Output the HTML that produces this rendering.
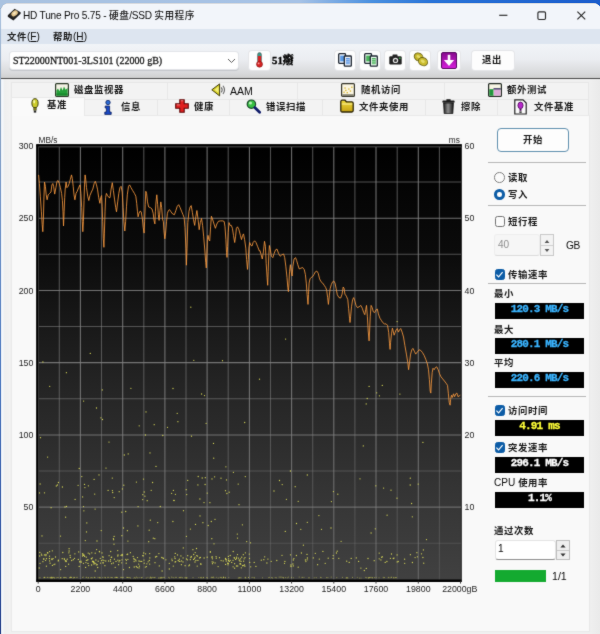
<!DOCTYPE html>
<html lang="zh-CN">
<head>
<meta charset="utf-8">
<title>HD Tune Pro 5.75 - 硬盘/SSD 实用程序</title>
<style>
*{box-sizing:border-box;margin:0;padding:0}
html,body{width:600px;height:634px;overflow:hidden}
body{position:relative;font-family:"Liberation Sans","Noto Sans CJK SC",sans-serif;font-size:10px;color:#1a1a1a;
 background:linear-gradient(90deg,#a9c2e0 0%,#a6c2e6 50%,#4a90e0 62%,#2a74d8 72%,#1a5ccc 100%);}
.abs{position:absolute}
#frame{position:absolute;left:0.8px;top:3px;width:600px;height:632px;background:#f0f0f0;border-radius:8px 8px 0 0;overflow:hidden}
#title{position:absolute;left:0;top:0;width:600px;height:29px;background:#f2f5fa}
#menu{position:absolute;left:0;top:29px;width:600px;height:15px;background:#dde5f0}
#tool{position:absolute;left:0;top:44px;width:600px;height:35px;background:linear-gradient(180deg,#f1f4f8 0%,#ebedf1 45%,#d9dadc 85%,#cfcfcf 100%);border-bottom:1.5px solid #4c4c4c}
.t{will-change:transform;position:absolute;white-space:nowrap;line-height:14px;font-size:9.4px;letter-spacing:0.6px;color:#161616;font-weight:700}
.l{font-size:10.1px;letter-spacing:0;font-weight:400;color:#0a0a0a}
.combo{position:absolute;left:10px;top:52px;width:228px;height:17px;background:#fff;border-radius:3px;box-shadow:0 0 0 1px #e3e5e9,0 1px 0 1px #c4c6ca}
.ser{font-family:"Liberation Serif","Noto Serif CJK SC",serif;font-weight:bold;font-size:10px;letter-spacing:0}
.tbtn{position:absolute;top:51px;height:19px;background:#fdfdfd;border-radius:3px;box-shadow:0 0 0 1px #e4e5e8}
.tab{position:absolute;border:1px solid #e7e7e7;border-bottom:none;background:#f3f3f3}
#page{position:absolute;left:10.6px;top:115px;width:579px;height:517.3px;background:#f9f9f9;border:1px solid #e9e9e9}
.sep{position:absolute;left:488px;width:98px;height:1.3px;background:#b6b6b6}
.lcd{will-change:transform;position:absolute;left:495px;width:89px;height:15.5px;background:#000;font-family:"Liberation Mono",monospace;font-weight:bold;font-size:11px;letter-spacing:-0.84px;line-height:13px;text-align:center;white-space:nowrap;-webkit-text-stroke:0.3px currentColor}
.cb{position:absolute;left:494.5px;width:10.5px;height:10.5px;border-radius:2.5px;border:1.3px solid #727272;background:#fbfbfb}
.cb.on{background:#0c5ca6;border-color:#0c5ca6}
.cb svg{position:absolute;left:-1.3px;top:-1.3px}
.rd{position:absolute;left:494.4px;width:10.6px;height:10.6px;border-radius:50%;border:1.3px solid #7c7c7c;background:#fbfbfb}
.rd.on{border:3.2px solid #0c5ca6;background:#fff}
.axis text{font-family:"Liberation Sans",sans-serif;font-size:8.8px;fill:#1c1c1c}
</style>
</head>
<body>
<svg width="0" height="0" style="position:absolute"><defs><filter id="soft" x="0" y="0" width="100%" height="100%" color-interpolation-filters="sRGB"><feConvolveMatrix order="3" kernelMatrix="0.02 0.07 0.02 0.07 0.64 0.07 0.02 0.07 0.02" divisor="1" edgeMode="duplicate" preserveAlpha="true"/></filter></defs></svg>
<div id="root" style="position:absolute;left:0;top:0;width:600px;height:634px;overflow:hidden;filter:url(#soft)">
<div class="abs" style="left:0;top:8px;width:2px;height:626px;background:linear-gradient(180deg,#a9c2e0 0,#8fa6c0 14%,#6e92c6 30%,#3f6eba 60%,#1c3f94 92%,#14307e 100%)"></div>
<div id="frame"></div>
<div class="abs" style="left:0.8px;top:3px;width:600px;height:632px;border-radius:8px 8px 0 0;overflow:hidden">
 <div class="abs" style="left:-0.8px;top:-3px;width:600px;height:634px">
 <div id="title"></div>
 <div id="menu"></div>
 <div id="tool"></div>
 <div class="abs" style="left:1px;top:79px;width:9px;height:555px;background:linear-gradient(90deg,#f3f6fa 0,#f3f6fa 20%,#efefef 40%,#f2f2f2 100%)"></div>
 <div class="abs" style="left:589px;top:79px;width:11px;height:555px;background:linear-gradient(90deg,#f0f0f0,#eaeaea)"></div>
 </div>
</div>

<!-- title -->
<svg class="abs" style="left:0;top:0" width="30" height="26" viewBox="0 0 30 26"><polygon points="7.8,15.2 14.6,8.8 20.6,12.2 20.6,13.8 13.4,20.6 7.8,16.8" fill="#1e1e1e"/><polygon points="9.2,15.2 14.7,10 19.2,12.5 13.5,18" fill="#3a342c"/><ellipse cx="14.6" cy="13.4" rx="3.5" ry="2.5" transform="rotate(-38 14.6 13.4)" fill="#e6c88e"/><ellipse cx="14.4" cy="13.2" rx="1.5" ry="1" transform="rotate(-38 14.4 13.2)" fill="#f6e8c8"/></svg>
<div class="t" style="left:23.3px;top:9px;font-weight:500;font-size:9.7px;letter-spacing:0.5px"><span class="l" style="letter-spacing:-0.2px">HD Tune Pro 5.75 - </span>硬盘<span class="l" style="letter-spacing:-0.3px">/SSD </span>实用程序</div>
<svg class="abs" style="left:490px;top:5px" width="110" height="22" viewBox="0 0 110 22" fill="none" stroke="#262626" stroke-width="1.15"><line x1="9.2" y1="10.3" x2="17.4" y2="10.3"/><rect x="47.9" y="6.9" width="7.6" height="7.6" rx="1.2"/><path d="M87.4 6.6 L95.2 14.4 M95.2 6.6 L87.4 14.4"/></svg>

<!-- menu -->
<div class="t" style="left:6.7px;top:29.5px">文件<span class="l">(<u>F</u>)</span></div>
<div class="t" style="left:53.3px;top:29.5px">帮助<span class="l">(<u>H</u>)</span></div>

<!-- toolbar -->
<div class="combo"></div>
<div class="t ser" style="left:12.7px;top:53.5px;letter-spacing:0.03px;color:#1a1a1a;font-weight:400;-webkit-text-stroke:0.3px #1a1a1a">ST22000NT001-3LS101 (22000 gB)</div>
<svg class="abs" style="left:227px;top:58px" width="9" height="6" viewBox="0 0 9 6" fill="none" stroke="#5a5a5a" stroke-width="1"><path d="M1 1 L4.5 4.5 L8 1"/></svg>
<div class="tbtn" style="left:249px;width:21px"></div>
<svg class="abs" style="left:254px;top:52px" width="11" height="16" viewBox="0 0 11 16"><rect x="3.6" y="0.6" width="3.8" height="10" rx="1.9" fill="#3a9a8a" stroke="#555" stroke-width="0.6"/><rect x="3.9" y="4" width="3.2" height="8" fill="#d62222"/><circle cx="5.5" cy="12.2" r="3" fill="#d62222" stroke="#7a1010" stroke-width="0.6"/><circle cx="4.6" cy="11.4" r="0.9" fill="#f6a0a0"/></svg>
<div class="t ser" style="left:272.4px;top:53.3px;color:#000;font-size:10.8px;font-weight:900;-webkit-text-stroke:0.35px #000">51癈</div>
<div class="tbtn" style="left:334.5px;width:20.5px"></div>
<div class="tbtn" style="left:359.5px;width:20.5px"></div>
<div class="tbtn" style="left:384.5px;width:20.5px"></div>
<div class="tbtn" style="left:409.5px;width:20.5px"></div>
<div class="tbtn" style="left:437.5px;width:22.5px"></div>
<div class="tbtn" style="left:471.6px;width:42px"></div>
<svg class="abs" style="left:338px;top:53px" width="14" height="14" viewBox="0 0 14 14"><rect x="0.7" y="0.7" width="6.8" height="9.6" rx="0.8" fill="#f4f8ff" stroke="#1c2430" stroke-width="1.3"/><rect x="2.2" y="2.6" width="3.8" height="5.8" fill="#5a9ae6"/><rect x="6.3" y="3" width="7" height="10.2" rx="0.8" fill="#f4f8ff" stroke="#1c2430" stroke-width="1.3"/><rect x="7.9" y="5" width="3.8" height="6.2" fill="#4a8ae0"/><path d="M8 6.4 H11.6 M8 8.2 H11.6 M8 10 H11.6" stroke="#dcecff" stroke-width="0.7"/></svg>
<svg class="abs" style="left:363.5px;top:53px" width="14" height="14" viewBox="0 0 14 14"><rect x="0.7" y="0.7" width="6.8" height="9.6" rx="0.8" fill="#f4fff6" stroke="#1c2430" stroke-width="1.3"/><rect x="2.2" y="2.6" width="3.8" height="5.8" fill="#4ab45a"/><rect x="6.3" y="3" width="7" height="10.2" rx="0.8" fill="#f4fff6" stroke="#1c2430" stroke-width="1.3"/><rect x="7.9" y="5" width="3.8" height="6.2" fill="#3aa64a"/><path d="M8 6.4 H11.6 M8 8.2 H11.6 M8 10 H11.6" stroke="#dcffe2" stroke-width="0.7"/></svg>
<svg class="abs" style="left:388.5px;top:54px" width="13" height="11" viewBox="0 0 13 11"><rect x="0.3" y="2.3" width="12.4" height="8.2" rx="1.2" fill="#222"/><rect x="3.5" y="0.4" width="5" height="3" rx="0.6" fill="#222"/><circle cx="6.5" cy="6.4" r="2.7" fill="#e8e8e8"/><circle cx="6.5" cy="6.4" r="1.5" fill="#363636"/><rect x="10" y="3.6" width="1.6" height="1.2" fill="#3ac04a"/></svg>
<svg class="abs" style="left:413px;top:52px" width="16" height="15" viewBox="0 0 16 15"><ellipse cx="5.6" cy="5" rx="4.6" ry="3.8" transform="rotate(30 5.6 5)" fill="#c4b628" stroke="#6a6214" stroke-width="0.9"/><ellipse cx="10" cy="9.6" rx="4.8" ry="3.9" transform="rotate(30 10 9.6)" fill="#cabc2e" stroke="#6a6214" stroke-width="0.9"/><ellipse cx="5.4" cy="4.6" rx="2" ry="1.4" transform="rotate(30 5.4 4.6)" fill="#e6dc6a"/><ellipse cx="9.8" cy="9.2" rx="2.2" ry="1.5" transform="rotate(30 9.8 9.2)" fill="#e6dc6a"/></svg>
<svg class="abs" style="left:441px;top:51.5px" width="16" height="17" viewBox="0 0 16 17"><defs><linearGradient id="pg" x1="0" y1="0" x2="0" y2="1"><stop offset="0" stop-color="#86088c"/><stop offset="1" stop-color="#d620dc"/></linearGradient></defs><rect x="0.5" y="0.5" width="15" height="16" rx="1.5" fill="url(#pg)" stroke="#560660"/><path d="M8 2.8 V10" fill="none" stroke="#fff" stroke-width="2.6"/><path d="M2.8 8 L8 14 L13.2 8 Z" fill="#fff"/></svg>
<div class="t" style="left:482.4px;top:53.3px">退出</div>

<!-- tab row 1 -->
<div class="tab" style="left:11px;top:81.5px;width:157px;height:17px"></div>
<div class="tab" style="left:167px;top:81.5px;width:131px;height:17px"></div>
<div class="tab" style="left:297px;top:81.5px;width:147.5px;height:17px"></div>
<div class="tab" style="left:443.5px;top:81.5px;width:145px;height:17px"></div>
<!-- tab row 2 -->
<div class="tab" style="left:84px;top:98.5px;width:74px;height:17px"></div>
<div class="tab" style="left:157px;top:98.5px;width:73px;height:17px"></div>
<div class="tab" style="left:229px;top:98.5px;width:94px;height:17px"></div>
<div class="tab" style="left:322px;top:98.5px;width:104px;height:17px"></div>
<div class="tab" style="left:425px;top:98.5px;width:73px;height:17px"></div>
<div class="tab" style="left:497px;top:98.5px;width:91.5px;height:17px"></div>
<div id="page"></div>
<div class="tab" style="left:10.6px;top:96.8px;width:74.9px;height:19.7px;background:#fafafa;border-color:#e9e9e9"></div>

<!-- tab labels -->
<div class="t" style="left:74px;top:83.2px">磁盘监视器</div>
<div class="t l" style="left:230.4px;top:83.6px;font-size:10.5px">AAM</div>
<div class="t" style="left:361px;top:83.3px">随机访问</div>
<div class="t" style="left:507px;top:83.3px">额外测试</div>
<div class="t" style="left:47px;top:98.3px">基准</div>
<div class="t" style="left:120.7px;top:100.3px">信息</div>
<div class="t" style="left:193.5px;top:100.3px">健康</div>
<div class="t" style="left:266px;top:100.3px">错误扫描</div>
<div class="t" style="left:358.7px;top:100.3px">文件夹使用</div>
<div class="t" style="left:460.5px;top:100.3px">擦除</div>
<div class="t" style="left:533.7px;top:100.3px">文件基准</div>

<!-- tab icons -->
<svg class="abs" style="left:54.5px;top:83px" width="14" height="14" viewBox="0 0 14 14"><rect x="0.6" y="0.6" width="12.8" height="12.8" rx="1" fill="#f4f2e4" stroke="#2a3a26" stroke-width="1.2"/><path d="M1.4 12.6 V7.6 L3 5.6 L4.4 8.2 L6 4 L7.6 7.6 L9 3.4 L10.6 6.8 L12.6 5 V12.6 Z" fill="#25a03a"/><path d="M1.4 12.6 V10.4 H12.6 V12.6 Z" fill="#178a2c"/></svg>
<svg class="abs" style="left:210.6px;top:83px" width="16" height="14" viewBox="0 0 16 14"><path d="M0.8 6.8 L8.6 0.9 V12.9 Z" fill="#d8d022" stroke="#3e3a0a" stroke-width="1" stroke-linejoin="round"/><path d="M3.4 6.8 L7.6 3.6 V10 Z" fill="#f2ee7a"/><path d="M10.2 4.4 Q12.2 6.9 10.2 9.4 M12 2.8 Q15 6.9 12 11" fill="none" stroke="#6a6a6a" stroke-width="1.1"/></svg>
<svg class="abs" style="left:341px;top:83px" width="14" height="14" viewBox="0 0 14 14"><rect x="0.6" y="0.6" width="12.8" height="12.8" rx="1" fill="#fbf6e2" stroke="#34342a" stroke-width="1.2"/><g fill="#d8b428"><rect x="2.4" y="8.6" width="1.3" height="1.3"/><rect x="4.2" y="6.8" width="1.3" height="1.3"/><rect x="5.6" y="9" width="1.3" height="1.3"/><rect x="7.2" y="5.4" width="1.3" height="1.3"/><rect x="8.8" y="7.4" width="1.3" height="1.3"/><rect x="10.2" y="3.6" width="1.3" height="1.3"/><rect x="3.4" y="4.4" width="1.3" height="1.3"/></g><rect x="1.4" y="11.4" width="11.2" height="1.2" fill="#5a5a4a"/></svg>
<svg class="abs" style="left:487.5px;top:83px" width="14" height="14" viewBox="0 0 14 14"><rect x="0.6" y="0.6" width="12.8" height="12.8" rx="1" fill="#f8f6e4" stroke="#222a24" stroke-width="1.2"/><rect x="1.3" y="6.2" width="4.2" height="6.5" fill="#22963e"/><rect x="5.5" y="5.2" width="7.2" height="1.5" fill="#2a2a5a"/><rect x="5.9" y="6.7" width="6.6" height="5.9" fill="#dcaad8"/></svg>

<svg class="abs" style="left:29.8px;top:98px" width="10" height="16" viewBox="0 0 10 16"><ellipse cx="5" cy="5.2" rx="3.1" ry="4.5" fill="#cccc2a" stroke="#3e3e0c" stroke-width="1"/><ellipse cx="4.2" cy="3.8" rx="1" ry="1.7" fill="#f6f6a8"/><rect x="3.8" y="9.4" width="2.4" height="2.8" fill="#86861e" stroke="#3a3a0e" stroke-width="0.6"/><rect x="3.8" y="12.6" width="2.4" height="2" fill="#262626"/></svg>
<svg class="abs" style="left:102.8px;top:99.5px" width="10" height="15" viewBox="0 0 10 15"><circle cx="5" cy="2.5" r="2.2" fill="#2a6ad4" stroke="#0c2260" stroke-width="0.8"/><path d="M2.2 6 H6.6 V12 H8.2 V14.4 H1.8 V12 H3.4 V8 H2.2 Z" fill="#1a48c4" stroke="#0c2260" stroke-width="0.8"/></svg>
<svg class="abs" style="left:174.5px;top:99.3px" width="14" height="14" viewBox="0 0 14 14"><path d="M4.8 0.7 H9.2 V4.8 H13.3 V9.2 H9.2 V13.3 H4.8 V9.2 H0.7 V4.8 H4.8 Z" fill="#e02020" stroke="#5e0a0a" stroke-width="1.1"/><path d="M5.8 1.8 H8.2 M1.8 5.9 H4.8" stroke="#f89a9a" stroke-width="0.8"/></svg>
<svg class="abs" style="left:246px;top:99px" width="16" height="15" viewBox="0 0 16 15"><circle cx="5.4" cy="5.2" r="4.2" fill="#38c044" stroke="#1a4a2a" stroke-width="1.2"/><circle cx="4.4" cy="4" r="1.6" fill="#b6f0b6"/><path d="M8.8 8.6 L13.6 13.2" stroke="#101c6a" stroke-width="2.8" stroke-linecap="round"/></svg>
<svg class="abs" style="left:339.5px;top:99.3px" width="14" height="14" viewBox="0 0 14 14"><defs><linearGradient id="fg" x1="0" y1="0" x2="0" y2="1"><stop offset="0" stop-color="#f0dc3c"/><stop offset="1" stop-color="#c4a012"/></linearGradient></defs><path d="M0.8 2.8 Q0.8 1.2 2.2 1.2 H5 L6.4 2.8 H11.8 Q13.2 2.8 13.2 4.2 V11.6 Q13.2 13 11.8 13 H2.2 Q0.8 13 0.8 11.6 Z" fill="url(#fg)" stroke="#2e2606" stroke-width="1.3"/><path d="M1.8 5 H12.2" stroke="#fbf0a0" stroke-width="1"/></svg>
<svg class="abs" style="left:441.6px;top:99.2px" width="13" height="15" viewBox="0 0 13 15"><defs><linearGradient id="tg" x1="0" y1="0" x2="1" y2="0"><stop offset="0" stop-color="#1e1e1e"/><stop offset="0.45" stop-color="#8e8e8e"/><stop offset="0.7" stop-color="#5a5a5a"/><stop offset="1" stop-color="#161616"/></linearGradient></defs><rect x="0.4" y="1.4" width="12.2" height="2.4" rx="0.8" fill="#1c1c1c"/><rect x="4.4" y="0.2" width="4.2" height="1.8" fill="#1c1c1c"/><path d="M1.6 4 H11.4 L10.8 14.6 H2.2 Z" fill="url(#tg)" stroke="#141414" stroke-width="0.8"/></svg>
<svg class="abs" style="left:513.9px;top:98.7px" width="13" height="16" viewBox="0 0 13 16"><path d="M0.8 0.8 H9 L12.2 4 V15 H0.8 Z" fill="#fbfbfb" stroke="#222" stroke-width="1.2"/><ellipse cx="6.5" cy="6.4" rx="2.6" ry="3.3" fill="#b828cc" stroke="#4a0a56" stroke-width="0.8"/><rect x="5.5" y="9.8" width="2" height="2" fill="#4a0a56"/><rect x="5.3" y="12.4" width="2.4" height="1.4" fill="#222"/></svg>

<!-- chart -->
<svg class="abs" style="left:0;top:0;will-change:transform" width="600" height="634" viewBox="0 0 600 634">
 <defs><linearGradient id="bg" x1="0" y1="0" x2="0" y2="1"><stop offset="0" stop-color="#000"/><stop offset="0.25" stop-color="#0b0b0b"/><stop offset="0.55" stop-color="#242424"/><stop offset="0.8" stop-color="#353535"/><stop offset="1" stop-color="#414141"/></linearGradient><linearGradient id="glM" gradientUnits="userSpaceOnUse" x1="0" y1="145" x2="0" y2="581"><stop offset="0" stop-color="#828282" stop-opacity="0.88"/><stop offset="0.6" stop-color="#828282" stop-opacity="0.86"/><stop offset="1" stop-color="#828282" stop-opacity="0.6"/></linearGradient><linearGradient id="glm" gradientUnits="userSpaceOnUse" x1="0" y1="145" x2="0" y2="581"><stop offset="0" stop-color="#828282" stop-opacity="0.62"/><stop offset="0.6" stop-color="#828282" stop-opacity="0.55"/><stop offset="1" stop-color="#828282" stop-opacity="0.25"/></linearGradient></defs>
 <rect x="36.4" y="144.4" width="425.2" height="437.3" fill="url(#bg)"/>
 <g stroke="#6b6b6b" stroke-width="1.05">
<line x1="59.3" y1="146" x2="59.3" y2="580" stroke="url(#glm)"/>
<line x1="80.4" y1="146" x2="80.4" y2="580" stroke="url(#glM)"/>
<line x1="101.5" y1="146" x2="101.5" y2="580" stroke="url(#glm)"/>
<line x1="122.7" y1="146" x2="122.7" y2="580" stroke="url(#glM)"/>
<line x1="143.8" y1="146" x2="143.8" y2="580" stroke="url(#glm)"/>
<line x1="164.9" y1="146" x2="164.9" y2="580" stroke="url(#glM)"/>
<line x1="186.0" y1="146" x2="186.0" y2="580" stroke="url(#glm)"/>
<line x1="207.1" y1="146" x2="207.1" y2="580" stroke="url(#glM)"/>
<line x1="228.2" y1="146" x2="228.2" y2="580" stroke="url(#glm)"/>
<line x1="249.4" y1="146" x2="249.4" y2="580" stroke="url(#glM)"/>
<line x1="270.5" y1="146" x2="270.5" y2="580" stroke="url(#glm)"/>
<line x1="291.6" y1="146" x2="291.6" y2="580" stroke="url(#glM)"/>
<line x1="312.7" y1="146" x2="312.7" y2="580" stroke="url(#glm)"/>
<line x1="333.8" y1="146" x2="333.8" y2="580" stroke="url(#glM)"/>
<line x1="354.9" y1="146" x2="354.9" y2="580" stroke="url(#glm)"/>
<line x1="376.0" y1="146" x2="376.0" y2="580" stroke="url(#glM)"/>
<line x1="397.2" y1="146" x2="397.2" y2="580" stroke="url(#glm)"/>
<line x1="418.3" y1="146" x2="418.3" y2="580" stroke="url(#glM)"/>
<line x1="439.4" y1="146" x2="439.4" y2="580" stroke="url(#glm)"/>
<line x1="38.2" y1="182.0" x2="461.5" y2="182.0" stroke="rgba(130,130,130,0.610)"/>
<line x1="38.2" y1="218.2" x2="461.5" y2="218.2" stroke="rgba(130,130,130,0.874)"/>
<line x1="38.2" y1="254.3" x2="461.5" y2="254.3" stroke="rgba(130,130,130,0.591)"/>
<line x1="38.2" y1="290.4" x2="461.5" y2="290.4" stroke="rgba(130,130,130,0.869)"/>
<line x1="38.2" y1="326.5" x2="461.5" y2="326.5" stroke="rgba(130,130,130,0.571)"/>
<line x1="38.2" y1="362.6" x2="461.5" y2="362.6" stroke="rgba(130,130,130,0.863)"/>
<line x1="38.2" y1="398.8" x2="461.5" y2="398.8" stroke="rgba(130,130,130,0.552)"/>
<line x1="38.2" y1="434.9" x2="461.5" y2="434.9" stroke="rgba(130,130,130,0.817)"/>
<line x1="38.2" y1="471.0" x2="461.5" y2="471.0" stroke="rgba(130,130,130,0.438)"/>
<line x1="38.2" y1="507.1" x2="461.5" y2="507.1" stroke="rgba(130,130,130,0.708)"/>
<line x1="38.2" y1="543.3" x2="461.5" y2="543.3" stroke="rgba(130,130,130,0.312)"/>
 <line x1="38.3" y1="146" x2="38.3" y2="580"/><line x1="38" y1="146.6" x2="461.5" y2="146.6"/>
 </g>
 <g stroke="#000" stroke-width="2.1"><line x1="37.35" y1="144.4" x2="37.35" y2="581.7"/><line x1="36.4" y1="145.35" x2="461.7" y2="145.35"/><line x1="36.4" y1="580.7" x2="461.7" y2="580.7" stroke-width="2.4"/></g>
 <line x1="461.4" y1="144.4" x2="461.4" y2="581.7" stroke="#1a1a1a" stroke-width="0.7"/>
 <g fill="#dede58">
<circle cx="107.5" cy="577.3" r="0.55" opacity="0.50"/>
<circle cx="71.0" cy="577.5" r="0.55" opacity="0.50"/>
<circle cx="176.4" cy="577.2" r="0.55" opacity="0.50"/>
<circle cx="54.5" cy="577.9" r="0.55" opacity="0.50"/>
<circle cx="152.2" cy="577.4" r="0.55" opacity="0.50"/>
<circle cx="116.3" cy="577.5" r="0.55" opacity="0.50"/>
<circle cx="51.4" cy="577.6" r="0.55" opacity="0.50"/>
<circle cx="146.2" cy="577.9" r="0.55" opacity="0.50"/>
<circle cx="47.1" cy="577.5" r="0.55" opacity="0.50"/>
<circle cx="130.6" cy="577.9" r="0.55" opacity="0.50"/>
<circle cx="53.9" cy="577.6" r="0.55" opacity="0.50"/>
<circle cx="58.3" cy="577.6" r="0.55" opacity="0.50"/>
<circle cx="128.7" cy="577.6" r="0.55" opacity="0.50"/>
<circle cx="213.5" cy="577.1" r="0.55" opacity="0.50"/>
<circle cx="65.3" cy="577.5" r="0.55" opacity="0.50"/>
<circle cx="86.3" cy="577.3" r="0.55" opacity="0.50"/>
<circle cx="171.5" cy="577.1" r="0.55" opacity="0.50"/>
<circle cx="239.0" cy="577.8" r="0.55" opacity="0.50"/>
<circle cx="160.9" cy="577.3" r="0.55" opacity="0.50"/>
<circle cx="122.8" cy="577.5" r="0.55" opacity="0.50"/>
<circle cx="245.0" cy="577.8" r="0.55" opacity="0.50"/>
<circle cx="49.0" cy="577.6" r="0.55" opacity="0.50"/>
<circle cx="220.2" cy="577.4" r="0.55" opacity="0.50"/>
<circle cx="100.2" cy="577.6" r="0.55" opacity="0.50"/>
<circle cx="69.6" cy="577.6" r="0.55" opacity="0.50"/>
<circle cx="64.0" cy="577.8" r="0.55" opacity="0.50"/>
<circle cx="104.2" cy="577.2" r="0.55" opacity="0.50"/>
<circle cx="211.2" cy="577.6" r="0.55" opacity="0.50"/>
<circle cx="77.3" cy="577.3" r="0.55" opacity="0.50"/>
<circle cx="161.8" cy="577.3" r="0.55" opacity="0.50"/>
<circle cx="173.9" cy="577.8" r="0.55" opacity="0.50"/>
<circle cx="117.7" cy="577.6" r="0.55" opacity="0.50"/>
<circle cx="154.7" cy="577.6" r="0.55" opacity="0.50"/>
<circle cx="52.4" cy="577.8" r="0.55" opacity="0.50"/>
<circle cx="51.8" cy="577.9" r="0.55" opacity="0.50"/>
<circle cx="82.6" cy="577.5" r="0.55" opacity="0.50"/>
<circle cx="182.6" cy="577.7" r="0.55" opacity="0.50"/>
<circle cx="129.3" cy="577.6" r="0.55" opacity="0.50"/>
<circle cx="105.4" cy="577.6" r="0.55" opacity="0.50"/>
<circle cx="162.6" cy="577.7" r="0.55" opacity="0.50"/>
<circle cx="134.7" cy="577.5" r="0.55" opacity="0.50"/>
<circle cx="102.4" cy="577.6" r="0.55" opacity="0.50"/>
<circle cx="206.7" cy="577.5" r="0.55" opacity="0.50"/>
<circle cx="186.5" cy="577.9" r="0.55" opacity="0.50"/>
<circle cx="90.7" cy="577.7" r="0.55" opacity="0.50"/>
<circle cx="160.3" cy="577.9" r="0.55" opacity="0.50"/>
<circle cx="149.9" cy="577.9" r="0.55" opacity="0.50"/>
<circle cx="223.7" cy="577.3" r="0.55" opacity="0.50"/>
<circle cx="193.0" cy="577.6" r="0.55" opacity="0.50"/>
<circle cx="99.9" cy="577.9" r="0.55" opacity="0.50"/>
<circle cx="245.8" cy="577.9" r="0.55" opacity="0.50"/>
<circle cx="64.1" cy="577.2" r="0.55" opacity="0.50"/>
<circle cx="127.3" cy="577.2" r="0.55" opacity="0.50"/>
<circle cx="198.8" cy="577.5" r="0.55" opacity="0.50"/>
<circle cx="71.2" cy="577.2" r="0.55" opacity="0.50"/>
<circle cx="142.3" cy="577.3" r="0.55" opacity="0.50"/>
<circle cx="47.5" cy="577.2" r="0.55" opacity="0.50"/>
<circle cx="180.1" cy="577.7" r="0.55" opacity="0.50"/>
<circle cx="200.4" cy="577.8" r="0.55" opacity="0.50"/>
<circle cx="160.0" cy="577.9" r="0.55" opacity="0.50"/>
<circle cx="223.8" cy="577.2" r="0.55" opacity="0.50"/>
<circle cx="105.3" cy="577.7" r="0.55" opacity="0.50"/>
<circle cx="185.8" cy="577.7" r="0.55" opacity="0.50"/>
<circle cx="164.5" cy="577.2" r="0.55" opacity="0.50"/>
<circle cx="161.4" cy="577.9" r="0.55" opacity="0.50"/>
<circle cx="135.4" cy="578.0" r="0.55" opacity="0.50"/>
<circle cx="216.3" cy="577.3" r="0.55" opacity="0.50"/>
<circle cx="238.3" cy="578.0" r="0.55" opacity="0.50"/>
<circle cx="139.1" cy="577.5" r="0.55" opacity="0.50"/>
<circle cx="179.2" cy="577.5" r="0.55" opacity="0.50"/>
<circle cx="52.0" cy="578.0" r="0.55" opacity="0.50"/>
<circle cx="187.1" cy="577.8" r="0.55" opacity="0.50"/>
<circle cx="175.6" cy="577.2" r="0.55" opacity="0.50"/>
<circle cx="248.5" cy="577.5" r="0.55" opacity="0.50"/>
<circle cx="212.5" cy="577.6" r="0.55" opacity="0.50"/>
<circle cx="99.2" cy="577.4" r="0.55" opacity="0.50"/>
<circle cx="120.5" cy="577.3" r="0.55" opacity="0.50"/>
<circle cx="180.2" cy="577.4" r="0.55" opacity="0.50"/>
<circle cx="44.0" cy="577.7" r="0.55" opacity="0.50"/>
<circle cx="136.5" cy="577.1" r="0.55" opacity="0.50"/>
<circle cx="74.6" cy="577.6" r="0.55" opacity="0.50"/>
<circle cx="63.9" cy="577.5" r="0.55" opacity="0.50"/>
<circle cx="51.6" cy="577.1" r="0.55" opacity="0.50"/>
<circle cx="201.1" cy="577.4" r="0.55" opacity="0.50"/>
<circle cx="66.5" cy="577.7" r="0.55" opacity="0.50"/>
<circle cx="91.4" cy="577.6" r="0.55" opacity="0.50"/>
<circle cx="121.6" cy="577.2" r="0.55" opacity="0.50"/>
<circle cx="222.9" cy="578.0" r="0.55" opacity="0.50"/>
<circle cx="56.2" cy="577.8" r="0.55" opacity="0.50"/>
<circle cx="133.9" cy="578.0" r="0.55" opacity="0.50"/>
<circle cx="155.0" cy="577.2" r="0.55" opacity="0.50"/>
<circle cx="225.4" cy="577.3" r="0.55" opacity="0.50"/>
<circle cx="211.9" cy="577.1" r="0.55" opacity="0.50"/>
<circle cx="221.3" cy="577.8" r="0.55" opacity="0.50"/>
<circle cx="97.9" cy="577.3" r="0.55" opacity="0.50"/>
<circle cx="126.7" cy="577.2" r="0.55" opacity="0.50"/>
<circle cx="114.8" cy="577.5" r="0.55" opacity="0.50"/>
<circle cx="225.6" cy="577.9" r="0.55" opacity="0.50"/>
<circle cx="241.1" cy="577.8" r="0.55" opacity="0.50"/>
<circle cx="71.0" cy="577.3" r="0.55" opacity="0.50"/>
<circle cx="76.3" cy="577.2" r="0.55" opacity="0.50"/>
<circle cx="88.1" cy="577.9" r="0.55" opacity="0.50"/>
<circle cx="88.4" cy="577.6" r="0.55" opacity="0.50"/>
<circle cx="141.4" cy="577.7" r="0.55" opacity="0.50"/>
<circle cx="163.4" cy="577.2" r="0.55" opacity="0.50"/>
<circle cx="94.6" cy="577.2" r="0.55" opacity="0.50"/>
<circle cx="40.1" cy="577.7" r="0.55" opacity="0.50"/>
<circle cx="127.5" cy="577.5" r="0.55" opacity="0.50"/>
<circle cx="117.0" cy="577.2" r="0.55" opacity="0.50"/>
<circle cx="158.6" cy="577.9" r="0.55" opacity="0.50"/>
<circle cx="240.1" cy="577.7" r="0.55" opacity="0.50"/>
<circle cx="184.8" cy="577.8" r="0.55" opacity="0.50"/>
<circle cx="147.9" cy="577.2" r="0.55" opacity="0.50"/>
<circle cx="169.4" cy="577.9" r="0.55" opacity="0.50"/>
<circle cx="181.7" cy="577.2" r="0.55" opacity="0.50"/>
<circle cx="50.6" cy="577.9" r="0.55" opacity="0.50"/>
<circle cx="228.8" cy="577.5" r="0.55" opacity="0.50"/>
<circle cx="203.6" cy="577.4" r="0.55" opacity="0.50"/>
<circle cx="223.5" cy="577.6" r="0.55" opacity="0.50"/>
<circle cx="207.4" cy="577.9" r="0.55" opacity="0.50"/>
<circle cx="121.9" cy="577.3" r="0.55" opacity="0.50"/>
<circle cx="123.3" cy="577.2" r="0.55" opacity="0.50"/>
<circle cx="61.0" cy="577.6" r="0.55" opacity="0.50"/>
<circle cx="172.9" cy="577.3" r="0.55" opacity="0.50"/>
<circle cx="52.3" cy="577.2" r="0.55" opacity="0.50"/>
<circle cx="53.4" cy="577.2" r="0.55" opacity="0.50"/>
<circle cx="83.2" cy="577.1" r="0.55" opacity="0.50"/>
<circle cx="73.4" cy="577.3" r="0.55" opacity="0.50"/>
<circle cx="110.9" cy="577.4" r="0.55" opacity="0.50"/>
<circle cx="50.3" cy="577.4" r="0.55" opacity="0.50"/>
<circle cx="39.2" cy="577.8" r="0.55" opacity="0.50"/>
<circle cx="71.1" cy="577.4" r="0.55" opacity="0.50"/>
<circle cx="60.6" cy="577.6" r="0.55" opacity="0.50"/>
<circle cx="115.8" cy="577.3" r="0.55" opacity="0.50"/>
<circle cx="44.6" cy="577.4" r="0.55" opacity="0.50"/>
<circle cx="223.5" cy="577.1" r="0.55" opacity="0.50"/>
<circle cx="168.6" cy="577.3" r="0.55" opacity="0.50"/>
<circle cx="70.5" cy="577.1" r="0.55" opacity="0.50"/>
<circle cx="92.4" cy="577.8" r="0.55" opacity="0.50"/>
<circle cx="112.4" cy="577.6" r="0.55" opacity="0.50"/>
<circle cx="116.0" cy="577.3" r="0.55" opacity="0.50"/>
<circle cx="65.1" cy="577.5" r="0.55" opacity="0.50"/>
<circle cx="218.2" cy="577.9" r="0.55" opacity="0.50"/>
<circle cx="248.5" cy="577.2" r="0.55" opacity="0.50"/>
<circle cx="137.4" cy="577.8" r="0.55" opacity="0.50"/>
<circle cx="141.2" cy="577.5" r="0.55" opacity="0.50"/>
<circle cx="57.3" cy="577.5" r="0.55" opacity="0.50"/>
<circle cx="60.7" cy="577.9" r="0.55" opacity="0.50"/>
<circle cx="111.4" cy="577.5" r="0.55" opacity="0.50"/>
<circle cx="95.0" cy="577.6" r="0.55" opacity="0.50"/>
<circle cx="213.9" cy="577.7" r="0.55" opacity="0.50"/>
<circle cx="73.2" cy="578.0" r="0.55" opacity="0.50"/>
<circle cx="44.1" cy="577.4" r="0.55" opacity="0.50"/>
<circle cx="239.7" cy="577.8" r="0.55" opacity="0.50"/>
<circle cx="150.6" cy="577.7" r="0.55" opacity="0.50"/>
<circle cx="70.1" cy="577.7" r="0.55" opacity="0.50"/>
<circle cx="153.7" cy="577.5" r="0.55" opacity="0.50"/>
<circle cx="44.9" cy="577.4" r="0.55" opacity="0.50"/>
<circle cx="150.5" cy="577.1" r="0.55" opacity="0.50"/>
<circle cx="245.5" cy="577.2" r="0.55" opacity="0.50"/>
<circle cx="221.2" cy="577.2" r="0.55" opacity="0.50"/>
<circle cx="186.0" cy="577.8" r="0.55" opacity="0.50"/>
<circle cx="94.2" cy="577.3" r="0.55" opacity="0.50"/>
<circle cx="116.5" cy="577.2" r="0.55" opacity="0.50"/>
<circle cx="74.4" cy="577.2" r="0.55" opacity="0.50"/>
<circle cx="201.9" cy="577.9" r="0.55" opacity="0.50"/>
<circle cx="151.5" cy="577.9" r="0.55" opacity="0.50"/>
<circle cx="203.4" cy="577.7" r="0.55" opacity="0.50"/>
<circle cx="108.7" cy="577.4" r="0.55" opacity="0.50"/>
<circle cx="86.2" cy="577.3" r="0.55" opacity="0.50"/>
<circle cx="370.1" cy="577.4" r="0.55" opacity="0.50"/>
<circle cx="395.8" cy="577.5" r="0.55" opacity="0.50"/>
<circle cx="376.2" cy="577.2" r="0.55" opacity="0.50"/>
<circle cx="369.3" cy="577.5" r="0.55" opacity="0.50"/>
<circle cx="371.1" cy="577.3" r="0.55" opacity="0.50"/>
<circle cx="359.5" cy="578.0" r="0.55" opacity="0.50"/>
<circle cx="283.6" cy="578.0" r="0.55" opacity="0.50"/>
<circle cx="326.6" cy="577.6" r="0.55" opacity="0.50"/>
<circle cx="302.6" cy="577.3" r="0.55" opacity="0.50"/>
<circle cx="254.3" cy="578.0" r="0.55" opacity="0.50"/>
<circle cx="254.1" cy="577.4" r="0.55" opacity="0.50"/>
<circle cx="291.4" cy="577.4" r="0.55" opacity="0.50"/>
<circle cx="288.4" cy="577.1" r="0.55" opacity="0.50"/>
<circle cx="352.5" cy="577.4" r="0.55" opacity="0.50"/>
<circle cx="391.6" cy="577.5" r="0.55" opacity="0.50"/>
<circle cx="316.2" cy="577.6" r="0.55" opacity="0.50"/>
<circle cx="388.7" cy="577.3" r="0.55" opacity="0.50"/>
<circle cx="396.2" cy="577.6" r="0.55" opacity="0.50"/>
<circle cx="391.3" cy="577.1" r="0.55" opacity="0.50"/>
<circle cx="304.0" cy="577.3" r="0.55" opacity="0.50"/>
<circle cx="282.6" cy="577.2" r="0.55" opacity="0.50"/>
<circle cx="283.6" cy="577.5" r="0.55" opacity="0.50"/>
<circle cx="279.1" cy="577.1" r="0.55" opacity="0.50"/>
<circle cx="280.2" cy="577.1" r="0.55" opacity="0.50"/>
<circle cx="342.4" cy="577.4" r="0.55" opacity="0.50"/>
<circle cx="383.2" cy="577.3" r="0.55" opacity="0.50"/>
<circle cx="374.4" cy="577.6" r="0.55" opacity="0.50"/>
<circle cx="321.0" cy="577.6" r="0.55" opacity="0.50"/>
<circle cx="346.6" cy="577.8" r="0.55" opacity="0.50"/>
<circle cx="368.3" cy="577.7" r="0.55" opacity="0.50"/>
<circle cx="262.5" cy="577.7" r="0.55" opacity="0.50"/>
<circle cx="347.8" cy="577.9" r="0.55" opacity="0.50"/>
<circle cx="384.6" cy="577.5" r="0.55" opacity="0.50"/>
<circle cx="365.8" cy="577.4" r="0.55" opacity="0.50"/>
<circle cx="361.0" cy="578.0" r="0.55" opacity="0.50"/>
<circle cx="320.7" cy="577.2" r="0.55" opacity="0.50"/>
<circle cx="276.4" cy="577.8" r="0.55" opacity="0.50"/>
<circle cx="366.8" cy="577.7" r="0.55" opacity="0.50"/>
<circle cx="299.2" cy="577.1" r="0.55" opacity="0.50"/>
<circle cx="368.5" cy="577.9" r="0.55" opacity="0.50"/>
<circle cx="393.8" cy="577.9" r="0.55" opacity="0.50"/>
<circle cx="308.6" cy="577.7" r="0.55" opacity="0.50"/>
<circle cx="309.4" cy="577.8" r="0.55" opacity="0.50"/>
<circle cx="390.1" cy="577.8" r="0.55" opacity="0.50"/>
<circle cx="357.3" cy="577.2" r="0.55" opacity="0.50"/>
<circle cx="275.2" cy="577.6" r="0.55" opacity="0.50"/>
<circle cx="268.8" cy="577.6" r="0.55" opacity="0.50"/>
<circle cx="272.4" cy="577.9" r="0.55" opacity="0.50"/>
<circle cx="383.9" cy="577.8" r="0.55" opacity="0.50"/>
<circle cx="369.4" cy="577.8" r="0.55" opacity="0.50"/>
<circle cx="271.6" cy="577.6" r="0.55" opacity="0.50"/>
<circle cx="372.3" cy="577.9" r="0.55" opacity="0.50"/>
<circle cx="395.1" cy="577.7" r="0.55" opacity="0.50"/>
<circle cx="347.3" cy="577.7" r="0.55" opacity="0.50"/>
<circle cx="301.9" cy="577.3" r="0.55" opacity="0.50"/>
<circle cx="331.2" cy="577.1" r="0.55" opacity="0.50"/>
<circle cx="269.4" cy="577.2" r="0.55" opacity="0.50"/>
<circle cx="252.1" cy="577.4" r="0.55" opacity="0.50"/>
<circle cx="393.7" cy="577.2" r="0.55" opacity="0.50"/>
<circle cx="346.2" cy="577.9" r="0.55" opacity="0.50"/>
<circle cx="327.9" cy="577.6" r="0.55" opacity="0.50"/>
<circle cx="388.2" cy="577.7" r="0.55" opacity="0.50"/>
<circle cx="314.2" cy="577.7" r="0.55" opacity="0.50"/>
<circle cx="379.0" cy="577.7" r="0.55" opacity="0.50"/>
<circle cx="372.3" cy="577.5" r="0.55" opacity="0.50"/>
<circle cx="281.2" cy="577.1" r="0.55" opacity="0.50"/>
<circle cx="287.3" cy="577.8" r="0.55" opacity="0.50"/>
<circle cx="293.4" cy="577.8" r="0.55" opacity="0.50"/>
<circle cx="285.6" cy="577.6" r="0.55" opacity="0.50"/>
<circle cx="336.8" cy="577.6" r="0.55" opacity="0.50"/>
<circle cx="178.2" cy="560.5" r="0.65" opacity="0.95"/>
<circle cx="53.1" cy="558.6" r="0.65" opacity="0.95"/>
<circle cx="194.5" cy="558.6" r="0.65" opacity="0.95"/>
<circle cx="92.4" cy="561.6" r="0.65" opacity="0.95"/>
<circle cx="54.9" cy="564.1" r="0.65" opacity="0.95"/>
<circle cx="95.2" cy="571.0" r="0.65" opacity="0.95"/>
<circle cx="192.9" cy="549.7" r="0.65" opacity="0.95"/>
<circle cx="82.5" cy="553.8" r="0.65" opacity="0.95"/>
<circle cx="195.2" cy="552.6" r="0.65" opacity="0.95"/>
<circle cx="244.9" cy="566.2" r="0.65" opacity="0.95"/>
<circle cx="143.3" cy="555.8" r="0.65" opacity="0.95"/>
<circle cx="119.8" cy="560.5" r="0.65" opacity="0.95"/>
<circle cx="140.2" cy="561.3" r="0.65" opacity="0.95"/>
<circle cx="183.3" cy="547.9" r="0.65" opacity="0.95"/>
<circle cx="200.9" cy="564.4" r="0.65" opacity="0.95"/>
<circle cx="169.3" cy="563.3" r="0.65" opacity="0.95"/>
<circle cx="174.7" cy="556.8" r="0.65" opacity="0.95"/>
<circle cx="55.5" cy="557.0" r="0.65" opacity="0.95"/>
<circle cx="70.3" cy="557.5" r="0.65" opacity="0.95"/>
<circle cx="92.7" cy="561.2" r="0.65" opacity="0.95"/>
<circle cx="195.9" cy="560.4" r="0.65" opacity="0.95"/>
<circle cx="103.4" cy="562.8" r="0.65" opacity="0.95"/>
<circle cx="158.9" cy="553.6" r="0.65" opacity="0.95"/>
<circle cx="41.8" cy="555.2" r="0.65" opacity="0.95"/>
<circle cx="52.0" cy="559.5" r="0.65" opacity="0.95"/>
<circle cx="95.9" cy="560.0" r="0.65" opacity="0.95"/>
<circle cx="180.9" cy="555.9" r="0.65" opacity="0.95"/>
<circle cx="185.1" cy="565.7" r="0.65" opacity="0.95"/>
<circle cx="181.6" cy="560.9" r="0.65" opacity="0.95"/>
<circle cx="100.5" cy="563.1" r="0.65" opacity="0.95"/>
<circle cx="148.1" cy="561.8" r="0.65" opacity="0.95"/>
<circle cx="137.2" cy="567.5" r="0.65" opacity="0.95"/>
<circle cx="137.5" cy="557.6" r="0.65" opacity="0.95"/>
<circle cx="64.2" cy="558.8" r="0.65" opacity="0.95"/>
<circle cx="227.6" cy="563.2" r="0.65" opacity="0.95"/>
<circle cx="81.2" cy="562.2" r="0.65" opacity="0.95"/>
<circle cx="245.4" cy="552.8" r="0.65" opacity="0.95"/>
<circle cx="236.6" cy="557.2" r="0.65" opacity="0.95"/>
<circle cx="42.9" cy="561.7" r="0.65" opacity="0.95"/>
<circle cx="136.0" cy="560.9" r="0.65" opacity="0.95"/>
<circle cx="212.0" cy="557.6" r="0.65" opacity="0.95"/>
<circle cx="243.3" cy="554.7" r="0.65" opacity="0.95"/>
<circle cx="133.9" cy="558.4" r="0.65" opacity="0.95"/>
<circle cx="95.8" cy="563.3" r="0.65" opacity="0.95"/>
<circle cx="83.4" cy="563.3" r="0.65" opacity="0.95"/>
<circle cx="238.5" cy="558.1" r="0.65" opacity="0.95"/>
<circle cx="83.6" cy="555.2" r="0.65" opacity="0.95"/>
<circle cx="161.8" cy="557.5" r="0.65" opacity="0.95"/>
<circle cx="69.1" cy="551.0" r="0.65" opacity="0.95"/>
<circle cx="149.7" cy="564.1" r="0.65" opacity="0.95"/>
<circle cx="240.0" cy="563.9" r="0.65" opacity="0.95"/>
<circle cx="67.2" cy="559.2" r="0.65" opacity="0.95"/>
<circle cx="212.1" cy="561.8" r="0.65" opacity="0.95"/>
<circle cx="146.4" cy="566.6" r="0.65" opacity="0.95"/>
<circle cx="226.2" cy="559.4" r="0.65" opacity="0.95"/>
<circle cx="187.5" cy="559.8" r="0.65" opacity="0.95"/>
<circle cx="88.0" cy="563.4" r="0.65" opacity="0.95"/>
<circle cx="228.4" cy="556.4" r="0.65" opacity="0.95"/>
<circle cx="141.7" cy="561.4" r="0.65" opacity="0.95"/>
<circle cx="44.4" cy="554.9" r="0.65" opacity="0.95"/>
<circle cx="40.0" cy="563.3" r="0.65" opacity="0.95"/>
<circle cx="142.8" cy="555.7" r="0.65" opacity="0.95"/>
<circle cx="134.2" cy="559.7" r="0.65" opacity="0.95"/>
<circle cx="102.9" cy="560.0" r="0.65" opacity="0.95"/>
<circle cx="68.9" cy="552.8" r="0.65" opacity="0.95"/>
<circle cx="111.7" cy="557.1" r="0.65" opacity="0.95"/>
<circle cx="105.8" cy="561.0" r="0.65" opacity="0.95"/>
<circle cx="216.3" cy="558.2" r="0.65" opacity="0.95"/>
<circle cx="39.6" cy="556.0" r="0.65" opacity="0.95"/>
<circle cx="197.5" cy="556.1" r="0.65" opacity="0.95"/>
<circle cx="216.1" cy="556.6" r="0.65" opacity="0.95"/>
<circle cx="64.5" cy="559.2" r="0.65" opacity="0.95"/>
<circle cx="234.5" cy="558.1" r="0.65" opacity="0.95"/>
<circle cx="189.5" cy="565.0" r="0.65" opacity="0.95"/>
<circle cx="229.3" cy="561.4" r="0.65" opacity="0.95"/>
<circle cx="100.3" cy="558.3" r="0.65" opacity="0.95"/>
<circle cx="117.7" cy="550.6" r="0.65" opacity="0.95"/>
<circle cx="122.0" cy="559.8" r="0.65" opacity="0.95"/>
<circle cx="249.7" cy="562.4" r="0.65" opacity="0.95"/>
<circle cx="163.4" cy="558.6" r="0.65" opacity="0.95"/>
<circle cx="115.2" cy="567.3" r="0.65" opacity="0.95"/>
<circle cx="129.4" cy="567.5" r="0.65" opacity="0.95"/>
<circle cx="97.2" cy="564.7" r="0.65" opacity="0.95"/>
<circle cx="49.4" cy="558.5" r="0.65" opacity="0.95"/>
<circle cx="60.6" cy="569.6" r="0.65" opacity="0.95"/>
<circle cx="215.1" cy="562.9" r="0.65" opacity="0.95"/>
<circle cx="99.4" cy="551.4" r="0.65" opacity="0.95"/>
<circle cx="236.4" cy="566.0" r="0.65" opacity="0.95"/>
<circle cx="91.8" cy="552.8" r="0.65" opacity="0.95"/>
<circle cx="95.2" cy="553.2" r="0.65" opacity="0.95"/>
<circle cx="146.9" cy="563.8" r="0.65" opacity="0.95"/>
<circle cx="79.2" cy="566.4" r="0.65" opacity="0.95"/>
<circle cx="117.9" cy="560.2" r="0.65" opacity="0.95"/>
<circle cx="240.8" cy="564.1" r="0.65" opacity="0.95"/>
<circle cx="225.6" cy="564.4" r="0.65" opacity="0.95"/>
<circle cx="210.4" cy="551.9" r="0.65" opacity="0.95"/>
<circle cx="172.2" cy="560.7" r="0.65" opacity="0.95"/>
<circle cx="231.7" cy="562.4" r="0.65" opacity="0.95"/>
<circle cx="237.5" cy="554.6" r="0.65" opacity="0.95"/>
<circle cx="155.0" cy="562.7" r="0.65" opacity="0.95"/>
<circle cx="190.9" cy="557.5" r="0.65" opacity="0.95"/>
<circle cx="49.6" cy="560.9" r="0.65" opacity="0.95"/>
<circle cx="193.6" cy="559.4" r="0.65" opacity="0.95"/>
<circle cx="134.2" cy="567.0" r="0.65" opacity="0.95"/>
<circle cx="197.9" cy="560.4" r="0.65" opacity="0.95"/>
<circle cx="175.1" cy="558.5" r="0.65" opacity="0.95"/>
<circle cx="99.5" cy="551.8" r="0.65" opacity="0.95"/>
<circle cx="49.5" cy="556.2" r="0.65" opacity="0.95"/>
<circle cx="234.6" cy="568.2" r="0.65" opacity="0.95"/>
<circle cx="66.0" cy="561.5" r="0.65" opacity="0.95"/>
<circle cx="138.7" cy="564.1" r="0.65" opacity="0.95"/>
<circle cx="111.6" cy="563.7" r="0.65" opacity="0.95"/>
<circle cx="102.0" cy="552.9" r="0.65" opacity="0.95"/>
<circle cx="195.0" cy="557.2" r="0.65" opacity="0.95"/>
<circle cx="245.0" cy="557.6" r="0.65" opacity="0.95"/>
<circle cx="94.0" cy="564.0" r="0.65" opacity="0.95"/>
<circle cx="177.5" cy="554.9" r="0.65" opacity="0.95"/>
<circle cx="102.6" cy="556.8" r="0.65" opacity="0.95"/>
<circle cx="156.7" cy="556.5" r="0.65" opacity="0.95"/>
<circle cx="122.3" cy="554.9" r="0.65" opacity="0.95"/>
<circle cx="74.5" cy="558.3" r="0.65" opacity="0.95"/>
<circle cx="73.3" cy="559.7" r="0.65" opacity="0.95"/>
<circle cx="83.0" cy="555.2" r="0.65" opacity="0.95"/>
<circle cx="230.2" cy="555.5" r="0.65" opacity="0.95"/>
<circle cx="144.0" cy="560.1" r="0.65" opacity="0.95"/>
<circle cx="85.6" cy="567.4" r="0.65" opacity="0.95"/>
<circle cx="230.2" cy="560.3" r="0.65" opacity="0.95"/>
<circle cx="249.3" cy="554.1" r="0.65" opacity="0.95"/>
<circle cx="134.1" cy="561.6" r="0.65" opacity="0.95"/>
<circle cx="68.6" cy="564.2" r="0.65" opacity="0.95"/>
<circle cx="79.8" cy="561.3" r="0.65" opacity="0.95"/>
<circle cx="58.3" cy="560.9" r="0.65" opacity="0.95"/>
<circle cx="111.3" cy="557.4" r="0.65" opacity="0.95"/>
<circle cx="58.4" cy="560.2" r="0.65" opacity="0.95"/>
<circle cx="89.6" cy="553.9" r="0.65" opacity="0.95"/>
<circle cx="93.7" cy="561.3" r="0.65" opacity="0.95"/>
<circle cx="159.3" cy="565.9" r="0.65" opacity="0.95"/>
<circle cx="226.2" cy="561.0" r="0.65" opacity="0.95"/>
<circle cx="197.2" cy="566.1" r="0.65" opacity="0.95"/>
<circle cx="126.2" cy="563.2" r="0.65" opacity="0.95"/>
<circle cx="126.4" cy="560.3" r="0.65" opacity="0.95"/>
<circle cx="149.7" cy="553.6" r="0.65" opacity="0.95"/>
<circle cx="118.6" cy="564.7" r="0.65" opacity="0.95"/>
<circle cx="110.5" cy="561.2" r="0.65" opacity="0.95"/>
<circle cx="52.3" cy="550.8" r="0.65" opacity="0.95"/>
<circle cx="97.7" cy="567.5" r="0.65" opacity="0.95"/>
<circle cx="243.2" cy="565.5" r="0.65" opacity="0.95"/>
<circle cx="65.7" cy="566.4" r="0.65" opacity="0.95"/>
<circle cx="145.3" cy="567.1" r="0.65" opacity="0.95"/>
<circle cx="171.9" cy="559.1" r="0.65" opacity="0.95"/>
<circle cx="221.1" cy="560.6" r="0.65" opacity="0.95"/>
<circle cx="84.7" cy="556.4" r="0.65" opacity="0.95"/>
<circle cx="96.3" cy="564.8" r="0.65" opacity="0.95"/>
<circle cx="91.6" cy="558.7" r="0.65" opacity="0.95"/>
<circle cx="123.5" cy="569.6" r="0.65" opacity="0.95"/>
<circle cx="133.2" cy="556.4" r="0.65" opacity="0.95"/>
<circle cx="240.3" cy="563.6" r="0.65" opacity="0.95"/>
<circle cx="218.1" cy="566.6" r="0.65" opacity="0.95"/>
<circle cx="223.2" cy="560.9" r="0.65" opacity="0.95"/>
<circle cx="43.8" cy="558.6" r="0.65" opacity="0.95"/>
<circle cx="46.0" cy="554.5" r="0.65" opacity="0.95"/>
<circle cx="188.8" cy="565.8" r="0.65" opacity="0.95"/>
<circle cx="228.0" cy="564.8" r="0.65" opacity="0.95"/>
<circle cx="139.0" cy="567.9" r="0.65" opacity="0.95"/>
<circle cx="163.0" cy="557.9" r="0.65" opacity="0.95"/>
<circle cx="39.2" cy="568.0" r="0.65" opacity="0.95"/>
<circle cx="121.7" cy="562.8" r="0.65" opacity="0.95"/>
<circle cx="234.6" cy="563.7" r="0.65" opacity="0.95"/>
<circle cx="213.2" cy="562.2" r="0.65" opacity="0.95"/>
<circle cx="219.5" cy="557.7" r="0.65" opacity="0.95"/>
<circle cx="244.1" cy="558.8" r="0.65" opacity="0.95"/>
<circle cx="91.6" cy="565.0" r="0.65" opacity="0.95"/>
<circle cx="62.2" cy="558.7" r="0.65" opacity="0.95"/>
<circle cx="71.7" cy="560.5" r="0.65" opacity="0.95"/>
<circle cx="149.3" cy="560.5" r="0.65" opacity="0.95"/>
<circle cx="183.0" cy="561.9" r="0.65" opacity="0.95"/>
<circle cx="237.7" cy="566.0" r="0.65" opacity="0.95"/>
<circle cx="191.3" cy="556.5" r="0.65" opacity="0.95"/>
<circle cx="175.7" cy="561.6" r="0.65" opacity="0.95"/>
<circle cx="200.4" cy="557.5" r="0.65" opacity="0.95"/>
<circle cx="135.6" cy="559.8" r="0.65" opacity="0.95"/>
<circle cx="155.5" cy="557.0" r="0.65" opacity="0.95"/>
<circle cx="47.5" cy="552.6" r="0.65" opacity="0.95"/>
<circle cx="204.1" cy="558.0" r="0.65" opacity="0.95"/>
<circle cx="88.2" cy="553.1" r="0.65" opacity="0.95"/>
<circle cx="233.1" cy="566.8" r="0.65" opacity="0.95"/>
<circle cx="175.3" cy="553.4" r="0.65" opacity="0.95"/>
<circle cx="103.2" cy="557.2" r="0.65" opacity="0.95"/>
<circle cx="66.2" cy="561.0" r="0.65" opacity="0.95"/>
<circle cx="92.3" cy="557.8" r="0.65" opacity="0.95"/>
<circle cx="173.3" cy="566.1" r="0.65" opacity="0.95"/>
<circle cx="186.5" cy="559.0" r="0.65" opacity="0.95"/>
<circle cx="62.8" cy="552.5" r="0.65" opacity="0.95"/>
<circle cx="54.0" cy="564.6" r="0.65" opacity="0.95"/>
<circle cx="149.8" cy="557.9" r="0.65" opacity="0.95"/>
<circle cx="162.1" cy="571.0" r="0.65" opacity="0.95"/>
<circle cx="121.0" cy="555.3" r="0.65" opacity="0.95"/>
<circle cx="86.3" cy="557.2" r="0.65" opacity="0.95"/>
<circle cx="165.9" cy="559.8" r="0.65" opacity="0.95"/>
<circle cx="41.4" cy="554.1" r="0.65" opacity="0.95"/>
<circle cx="102.8" cy="562.8" r="0.65" opacity="0.95"/>
<circle cx="136.3" cy="566.4" r="0.65" opacity="0.95"/>
<circle cx="241.3" cy="567.8" r="0.65" opacity="0.95"/>
<circle cx="175.1" cy="562.0" r="0.65" opacity="0.95"/>
<circle cx="225.5" cy="559.1" r="0.65" opacity="0.95"/>
<circle cx="139.4" cy="566.2" r="0.65" opacity="0.95"/>
<circle cx="88.7" cy="565.6" r="0.65" opacity="0.95"/>
<circle cx="91.3" cy="558.7" r="0.65" opacity="0.95"/>
<circle cx="241.7" cy="557.2" r="0.65" opacity="0.95"/>
<circle cx="187.7" cy="555.7" r="0.65" opacity="0.95"/>
<circle cx="104.0" cy="560.6" r="0.65" opacity="0.95"/>
<circle cx="43.8" cy="559.3" r="0.65" opacity="0.95"/>
<circle cx="144.2" cy="563.2" r="0.65" opacity="0.95"/>
<circle cx="181.4" cy="564.7" r="0.65" opacity="0.95"/>
<circle cx="127.7" cy="554.1" r="0.65" opacity="0.95"/>
<circle cx="93.4" cy="561.7" r="0.65" opacity="0.95"/>
<circle cx="179.9" cy="561.3" r="0.65" opacity="0.95"/>
<circle cx="234.2" cy="557.7" r="0.65" opacity="0.95"/>
<circle cx="87.0" cy="560.3" r="0.65" opacity="0.95"/>
<circle cx="46.4" cy="566.2" r="0.65" opacity="0.95"/>
<circle cx="110.5" cy="559.6" r="0.65" opacity="0.95"/>
<circle cx="127.9" cy="559.3" r="0.65" opacity="0.95"/>
<circle cx="183.1" cy="557.9" r="0.65" opacity="0.95"/>
<circle cx="81.0" cy="561.1" r="0.65" opacity="0.95"/>
<circle cx="207.2" cy="557.2" r="0.65" opacity="0.95"/>
<circle cx="195.0" cy="562.0" r="0.65" opacity="0.95"/>
<circle cx="145.6" cy="553.8" r="0.65" opacity="0.95"/>
<circle cx="82.5" cy="556.1" r="0.65" opacity="0.95"/>
<circle cx="243.6" cy="561.2" r="0.65" opacity="0.95"/>
<circle cx="104.9" cy="565.7" r="0.65" opacity="0.95"/>
<circle cx="212.1" cy="556.7" r="0.65" opacity="0.95"/>
<circle cx="87.9" cy="559.7" r="0.65" opacity="0.95"/>
<circle cx="85.9" cy="562.6" r="0.65" opacity="0.95"/>
<circle cx="199.5" cy="557.9" r="0.65" opacity="0.95"/>
<circle cx="101.4" cy="560.6" r="0.65" opacity="0.95"/>
<circle cx="239.9" cy="561.0" r="0.65" opacity="0.95"/>
<circle cx="143.7" cy="553.0" r="0.65" opacity="0.95"/>
<circle cx="78.7" cy="551.9" r="0.65" opacity="0.95"/>
<circle cx="86.3" cy="560.3" r="0.65" opacity="0.95"/>
<circle cx="127.1" cy="554.5" r="0.65" opacity="0.95"/>
<circle cx="179.4" cy="559.2" r="0.65" opacity="0.95"/>
<circle cx="239.2" cy="560.0" r="0.65" opacity="0.95"/>
<circle cx="70.1" cy="555.5" r="0.65" opacity="0.95"/>
<circle cx="122.1" cy="554.4" r="0.65" opacity="0.95"/>
<circle cx="84.1" cy="555.2" r="0.65" opacity="0.95"/>
<circle cx="244.5" cy="564.9" r="0.65" opacity="0.95"/>
<circle cx="69.1" cy="548.7" r="0.65" opacity="0.95"/>
<circle cx="50.1" cy="563.2" r="0.65" opacity="0.95"/>
<circle cx="51.9" cy="558.9" r="0.65" opacity="0.95"/>
<circle cx="122.1" cy="555.7" r="0.65" opacity="0.95"/>
<circle cx="228.5" cy="560.5" r="0.65" opacity="0.95"/>
<circle cx="225.5" cy="558.5" r="0.65" opacity="0.95"/>
<circle cx="193.7" cy="554.5" r="0.65" opacity="0.95"/>
<circle cx="249.5" cy="558.3" r="0.65" opacity="0.95"/>
<circle cx="235.6" cy="559.4" r="0.65" opacity="0.95"/>
<circle cx="108.6" cy="561.0" r="0.65" opacity="0.95"/>
<circle cx="78.3" cy="559.4" r="0.65" opacity="0.95"/>
<circle cx="236.5" cy="558.6" r="0.65" opacity="0.95"/>
<circle cx="196.5" cy="548.5" r="0.65" opacity="0.95"/>
<circle cx="45.9" cy="555.7" r="0.65" opacity="0.95"/>
<circle cx="179.3" cy="561.3" r="0.65" opacity="0.95"/>
<circle cx="119.0" cy="561.8" r="0.65" opacity="0.95"/>
<circle cx="118.0" cy="554.9" r="0.65" opacity="0.95"/>
<circle cx="109.1" cy="555.7" r="0.65" opacity="0.95"/>
<circle cx="74.9" cy="553.8" r="0.65" opacity="0.95"/>
<circle cx="39.8" cy="552.5" r="0.65" opacity="0.95"/>
<circle cx="98.2" cy="561.2" r="0.65" opacity="0.95"/>
<circle cx="113.3" cy="563.0" r="0.65" opacity="0.95"/>
<circle cx="240.6" cy="558.8" r="0.65" opacity="0.95"/>
<circle cx="65.3" cy="560.7" r="0.65" opacity="0.95"/>
<circle cx="242.5" cy="565.7" r="0.65" opacity="0.95"/>
<circle cx="82.9" cy="553.9" r="0.65" opacity="0.95"/>
<circle cx="114.4" cy="559.2" r="0.65" opacity="0.95"/>
<circle cx="212.4" cy="558.8" r="0.65" opacity="0.95"/>
<circle cx="212.5" cy="563.7" r="0.65" opacity="0.95"/>
<circle cx="130.4" cy="552.7" r="0.65" opacity="0.95"/>
<circle cx="49.6" cy="551.6" r="0.65" opacity="0.95"/>
<circle cx="139.0" cy="561.0" r="0.65" opacity="0.95"/>
<circle cx="117.8" cy="556.0" r="0.65" opacity="0.95"/>
<circle cx="233.0" cy="560.3" r="0.65" opacity="0.95"/>
<circle cx="79.9" cy="562.1" r="0.65" opacity="0.95"/>
<circle cx="116.0" cy="561.4" r="0.65" opacity="0.95"/>
<circle cx="228.3" cy="563.5" r="0.65" opacity="0.95"/>
<circle cx="45.6" cy="560.3" r="0.65" opacity="0.95"/>
<circle cx="125.8" cy="559.3" r="0.65" opacity="0.95"/>
<circle cx="210.3" cy="551.9" r="0.65" opacity="0.95"/>
<circle cx="200.8" cy="563.6" r="0.65" opacity="0.95"/>
<circle cx="47.8" cy="553.0" r="0.65" opacity="0.95"/>
<circle cx="46.5" cy="558.7" r="0.65" opacity="0.95"/>
<circle cx="52.4" cy="565.4" r="0.65" opacity="0.95"/>
<circle cx="233.2" cy="551.5" r="0.65" opacity="0.95"/>
<circle cx="93.4" cy="562.6" r="0.65" opacity="0.95"/>
<circle cx="196.7" cy="555.6" r="0.65" opacity="0.95"/>
<circle cx="228.6" cy="558.8" r="0.65" opacity="0.95"/>
<circle cx="110.7" cy="551.5" r="0.65" opacity="0.95"/>
<circle cx="96.6" cy="549.6" r="0.65" opacity="0.95"/>
<circle cx="241.1" cy="561.3" r="0.65" opacity="0.95"/>
<circle cx="169.3" cy="569.0" r="0.65" opacity="0.95"/>
<circle cx="94.5" cy="563.0" r="0.65" opacity="0.95"/>
<circle cx="190.3" cy="559.7" r="0.65" opacity="0.95"/>
<circle cx="305.4" cy="560.0" r="0.65" opacity="0.95"/>
<circle cx="298.2" cy="567.2" r="0.65" opacity="0.95"/>
<circle cx="250.7" cy="566.8" r="0.65" opacity="0.95"/>
<circle cx="382.2" cy="556.6" r="0.65" opacity="0.95"/>
<circle cx="410.4" cy="554.7" r="0.65" opacity="0.95"/>
<circle cx="360.9" cy="568.1" r="0.65" opacity="0.95"/>
<circle cx="415.1" cy="557.6" r="0.65" opacity="0.95"/>
<circle cx="254.2" cy="562.4" r="0.65" opacity="0.95"/>
<circle cx="290.9" cy="565.0" r="0.65" opacity="0.95"/>
<circle cx="333.2" cy="555.6" r="0.65" opacity="0.95"/>
<circle cx="417.4" cy="556.8" r="0.65" opacity="0.95"/>
<circle cx="416.9" cy="552.7" r="0.65" opacity="0.95"/>
<circle cx="317.6" cy="564.7" r="0.65" opacity="0.95"/>
<circle cx="293.9" cy="558.6" r="0.65" opacity="0.95"/>
<circle cx="325.2" cy="563.3" r="0.65" opacity="0.95"/>
<circle cx="336.4" cy="553.0" r="0.65" opacity="0.95"/>
<circle cx="412.4" cy="562.5" r="0.65" opacity="0.95"/>
<circle cx="282.0" cy="555.3" r="0.65" opacity="0.95"/>
<circle cx="390.4" cy="558.3" r="0.65" opacity="0.95"/>
<circle cx="379.2" cy="553.1" r="0.65" opacity="0.95"/>
<circle cx="394.0" cy="558.1" r="0.65" opacity="0.95"/>
<circle cx="385.2" cy="562.4" r="0.65" opacity="0.95"/>
<circle cx="356.3" cy="557.9" r="0.65" opacity="0.95"/>
<circle cx="307.4" cy="558.0" r="0.65" opacity="0.95"/>
<circle cx="305.9" cy="561.6" r="0.65" opacity="0.95"/>
<circle cx="313.3" cy="557.9" r="0.65" opacity="0.95"/>
<circle cx="386.9" cy="561.5" r="0.65" opacity="0.95"/>
<circle cx="263.8" cy="559.7" r="0.65" opacity="0.95"/>
<circle cx="284.5" cy="563.3" r="0.65" opacity="0.95"/>
<circle cx="381.8" cy="557.4" r="0.65" opacity="0.95"/>
<circle cx="293.3" cy="560.0" r="0.65" opacity="0.95"/>
<circle cx="261.3" cy="560.2" r="0.65" opacity="0.95"/>
<circle cx="255.9" cy="566.4" r="0.65" opacity="0.95"/>
<circle cx="346.7" cy="561.2" r="0.65" opacity="0.95"/>
<circle cx="307.0" cy="554.4" r="0.65" opacity="0.95"/>
<circle cx="421.5" cy="553.8" r="0.65" opacity="0.95"/>
<circle cx="404.6" cy="559.2" r="0.65" opacity="0.95"/>
<circle cx="422.9" cy="557.5" r="0.65" opacity="0.95"/>
<circle cx="296.4" cy="555.5" r="0.65" opacity="0.95"/>
<circle cx="264.7" cy="556.8" r="0.65" opacity="0.95"/>
<circle cx="266.9" cy="563.0" r="0.65" opacity="0.95"/>
<circle cx="337.2" cy="551.2" r="0.65" opacity="0.95"/>
<circle cx="374.2" cy="560.7" r="0.65" opacity="0.95"/>
<circle cx="328.2" cy="558.2" r="0.65" opacity="0.95"/>
<circle cx="291.0" cy="566.5" r="0.65" opacity="0.95"/>
<circle cx="322.9" cy="551.4" r="0.65" opacity="0.95"/>
<circle cx="358.6" cy="561.4" r="0.65" opacity="0.95"/>
<circle cx="368.0" cy="558.5" r="0.65" opacity="0.95"/>
<circle cx="380.9" cy="559.9" r="0.65" opacity="0.95"/>
<circle cx="398.2" cy="561.5" r="0.65" opacity="0.95"/>
<circle cx="366.3" cy="568.4" r="0.65" opacity="0.95"/>
<circle cx="271.2" cy="561.3" r="0.65" opacity="0.95"/>
<circle cx="397.2" cy="561.9" r="0.65" opacity="0.95"/>
<circle cx="301.4" cy="553.0" r="0.65" opacity="0.95"/>
<circle cx="349.2" cy="562.4" r="0.65" opacity="0.95"/>
<circle cx="315.3" cy="553.3" r="0.65" opacity="0.95"/>
<circle cx="379.2" cy="558.8" r="0.65" opacity="0.95"/>
<circle cx="284.9" cy="561.4" r="0.65" opacity="0.95"/>
<circle cx="293.3" cy="565.9" r="0.65" opacity="0.95"/>
<circle cx="292.9" cy="564.0" r="0.65" opacity="0.95"/>
<circle cx="276.8" cy="560.5" r="0.65" opacity="0.95"/>
<circle cx="404.7" cy="563.3" r="0.65" opacity="0.95"/>
<circle cx="351.2" cy="558.4" r="0.65" opacity="0.95"/>
<circle cx="307.1" cy="559.8" r="0.65" opacity="0.95"/>
<circle cx="319.3" cy="559.1" r="0.65" opacity="0.95"/>
<circle cx="423.7" cy="563.2" r="0.65" opacity="0.95"/>
<circle cx="338.8" cy="558.3" r="0.65" opacity="0.95"/>
<circle cx="290.5" cy="554.8" r="0.65" opacity="0.95"/>
<circle cx="391.5" cy="554.0" r="0.65" opacity="0.95"/>
<circle cx="364.3" cy="570.5" r="0.65" opacity="0.95"/>
<circle cx="423.4" cy="549.9" r="0.65" opacity="0.95"/>
<circle cx="267.9" cy="559.1" r="0.65" opacity="0.95"/>
<circle cx="333.1" cy="558.4" r="0.65" opacity="0.95"/>
<circle cx="393.3" cy="558.5" r="0.65" opacity="0.95"/>
<circle cx="397.1" cy="554.9" r="0.65" opacity="0.95"/>
<circle cx="202.2" cy="478.0" r="0.65" opacity="0.95"/>
<circle cx="112.3" cy="478.1" r="0.65" opacity="0.95"/>
<circle cx="187.7" cy="480.4" r="0.65" opacity="0.95"/>
<circle cx="152.6" cy="482.5" r="0.65" opacity="0.95"/>
<circle cx="84.9" cy="487.6" r="0.65" opacity="0.95"/>
<circle cx="221.0" cy="478.2" r="0.65" opacity="0.95"/>
<circle cx="58.4" cy="482.5" r="0.65" opacity="0.95"/>
<circle cx="212.0" cy="478.9" r="0.65" opacity="0.95"/>
<circle cx="75.1" cy="499.4" r="0.65" opacity="0.95"/>
<circle cx="39.5" cy="492.9" r="0.65" opacity="0.95"/>
<circle cx="81.8" cy="476.6" r="0.65" opacity="0.95"/>
<circle cx="199.9" cy="499.0" r="0.65" opacity="0.95"/>
<circle cx="245.3" cy="476.6" r="0.65" opacity="0.95"/>
<circle cx="40.1" cy="484.0" r="0.65" opacity="0.95"/>
<circle cx="142.7" cy="499.6" r="0.65" opacity="0.95"/>
<circle cx="142.8" cy="494.7" r="0.65" opacity="0.95"/>
<circle cx="207.2" cy="493.1" r="0.65" opacity="0.95"/>
<circle cx="78.1" cy="485.3" r="0.65" opacity="0.95"/>
<circle cx="143.5" cy="479.1" r="0.65" opacity="0.95"/>
<circle cx="112.4" cy="490.6" r="0.65" opacity="0.95"/>
<circle cx="214.6" cy="476.8" r="0.65" opacity="0.95"/>
<circle cx="94.1" cy="479.4" r="0.65" opacity="0.95"/>
<circle cx="238.2" cy="484.1" r="0.65" opacity="0.95"/>
<circle cx="99.0" cy="474.9" r="0.65" opacity="0.95"/>
<circle cx="84.5" cy="484.4" r="0.65" opacity="0.95"/>
<circle cx="186.7" cy="494.6" r="0.65" opacity="0.95"/>
<circle cx="144.2" cy="492.0" r="0.65" opacity="0.95"/>
<circle cx="62.4" cy="487.0" r="0.65" opacity="0.95"/>
<circle cx="173.4" cy="490.4" r="0.65" opacity="0.95"/>
<circle cx="56.3" cy="486.0" r="0.65" opacity="0.95"/>
<circle cx="205.3" cy="477.7" r="0.65" opacity="0.95"/>
<circle cx="186.2" cy="489.7" r="0.65" opacity="0.95"/>
<circle cx="205.1" cy="484.5" r="0.65" opacity="0.95"/>
<circle cx="171.6" cy="493.3" r="0.65" opacity="0.95"/>
<circle cx="114.2" cy="497.6" r="0.65" opacity="0.95"/>
<circle cx="123.8" cy="485.2" r="0.65" opacity="0.95"/>
<circle cx="122.4" cy="488.9" r="0.65" opacity="0.95"/>
<circle cx="226.9" cy="493.5" r="0.65" opacity="0.95"/>
<circle cx="57.4" cy="485.0" r="0.65" opacity="0.95"/>
<circle cx="226.5" cy="479.9" r="0.65" opacity="0.95"/>
<circle cx="44.5" cy="492.8" r="0.65" opacity="0.95"/>
<circle cx="82.6" cy="496.9" r="0.65" opacity="0.95"/>
<circle cx="94.7" cy="494.1" r="0.65" opacity="0.95"/>
<circle cx="229.2" cy="492.2" r="0.65" opacity="0.95"/>
<circle cx="144.9" cy="496.2" r="0.65" opacity="0.95"/>
<circle cx="119.2" cy="491.7" r="0.65" opacity="0.95"/>
<circle cx="225.5" cy="490.7" r="0.65" opacity="0.95"/>
<circle cx="88.4" cy="485.8" r="0.65" opacity="0.95"/>
<circle cx="136.4" cy="482.1" r="0.65" opacity="0.95"/>
<circle cx="151.2" cy="490.3" r="0.65" opacity="0.95"/>
<circle cx="198.2" cy="476.5" r="0.65" opacity="0.95"/>
<circle cx="197.9" cy="484.9" r="0.65" opacity="0.95"/>
<circle cx="175.4" cy="494.3" r="0.65" opacity="0.95"/>
<circle cx="112.7" cy="492.5" r="0.65" opacity="0.95"/>
<circle cx="108.1" cy="490.4" r="0.65" opacity="0.95"/>
<circle cx="279.5" cy="480.5" r="0.65" opacity="0.95"/>
<circle cx="410.2" cy="485.0" r="0.65" opacity="0.95"/>
<circle cx="375.8" cy="485.8" r="0.65" opacity="0.95"/>
<circle cx="391.0" cy="490.2" r="0.65" opacity="0.95"/>
<circle cx="282.2" cy="484.6" r="0.65" opacity="0.95"/>
<circle cx="333.4" cy="491.6" r="0.65" opacity="0.95"/>
<circle cx="397.0" cy="498.2" r="0.65" opacity="0.95"/>
<circle cx="360.0" cy="478.8" r="0.65" opacity="0.95"/>
<circle cx="274.0" cy="491.0" r="0.65" opacity="0.95"/>
<circle cx="337.8" cy="494.2" r="0.65" opacity="0.95"/>
<circle cx="418.2" cy="484.1" r="0.65" opacity="0.95"/>
<circle cx="295.2" cy="486.7" r="0.65" opacity="0.95"/>
<circle cx="286.4" cy="499.3" r="0.65" opacity="0.95"/>
<circle cx="307.3" cy="475.0" r="0.65" opacity="0.95"/>
<circle cx="383.6" cy="488.1" r="0.65" opacity="0.95"/>
<circle cx="410.3" cy="478.2" r="0.65" opacity="0.95"/>
<circle cx="204.0" cy="502.6" r="0.65" opacity="0.95"/>
<circle cx="237.5" cy="538.1" r="0.65" opacity="0.95"/>
<circle cx="148.7" cy="541.7" r="0.65" opacity="0.95"/>
<circle cx="60.5" cy="536.1" r="0.65" opacity="0.95"/>
<circle cx="160.3" cy="506.5" r="0.65" opacity="0.95"/>
<circle cx="153.3" cy="538.2" r="0.65" opacity="0.95"/>
<circle cx="190.4" cy="529.1" r="0.65" opacity="0.95"/>
<circle cx="147.2" cy="500.7" r="0.65" opacity="0.95"/>
<circle cx="174.0" cy="500.5" r="0.65" opacity="0.95"/>
<circle cx="214.0" cy="543.8" r="0.65" opacity="0.95"/>
<circle cx="149.2" cy="530.2" r="0.65" opacity="0.95"/>
<circle cx="125.7" cy="511.5" r="0.65" opacity="0.95"/>
<circle cx="239.0" cy="504.7" r="0.65" opacity="0.95"/>
<circle cx="83.5" cy="506.6" r="0.65" opacity="0.95"/>
<circle cx="183.5" cy="510.7" r="0.65" opacity="0.95"/>
<circle cx="121.9" cy="535.7" r="0.65" opacity="0.95"/>
<circle cx="200.0" cy="515.9" r="0.65" opacity="0.95"/>
<circle cx="65.0" cy="507.0" r="0.65" opacity="0.95"/>
<circle cx="246.7" cy="541.6" r="0.65" opacity="0.95"/>
<circle cx="114.1" cy="536.4" r="0.65" opacity="0.95"/>
<circle cx="51.1" cy="507.7" r="0.65" opacity="0.95"/>
<circle cx="97.0" cy="541.0" r="0.65" opacity="0.95"/>
<circle cx="123.5" cy="528.0" r="0.65" opacity="0.95"/>
<circle cx="42.0" cy="535.9" r="0.65" opacity="0.95"/>
<circle cx="127.4" cy="530.7" r="0.65" opacity="0.95"/>
<circle cx="127.9" cy="541.1" r="0.65" opacity="0.95"/>
<circle cx="186.4" cy="536.3" r="0.65" opacity="0.95"/>
<circle cx="113.4" cy="538.6" r="0.65" opacity="0.95"/>
<circle cx="95.1" cy="509.1" r="0.65" opacity="0.95"/>
<circle cx="86.5" cy="531.9" r="0.65" opacity="0.95"/>
<circle cx="195.5" cy="524.4" r="0.65" opacity="0.95"/>
<circle cx="237.3" cy="534.1" r="0.65" opacity="0.95"/>
<circle cx="150.3" cy="520.2" r="0.65" opacity="0.95"/>
<circle cx="85.3" cy="540.6" r="0.65" opacity="0.95"/>
<circle cx="208.2" cy="525.5" r="0.65" opacity="0.95"/>
<circle cx="121.8" cy="512.2" r="0.65" opacity="0.95"/>
<circle cx="83.9" cy="510.8" r="0.65" opacity="0.95"/>
<circle cx="66.5" cy="506.4" r="0.65" opacity="0.95"/>
<circle cx="202.9" cy="522.7" r="0.65" opacity="0.95"/>
<circle cx="209.9" cy="502.7" r="0.65" opacity="0.95"/>
<circle cx="172.9" cy="521.5" r="0.65" opacity="0.95"/>
<circle cx="138.1" cy="506.6" r="0.65" opacity="0.95"/>
<circle cx="157.7" cy="522.6" r="0.65" opacity="0.95"/>
<circle cx="86.8" cy="522.9" r="0.65" opacity="0.95"/>
<circle cx="242.4" cy="524.8" r="0.65" opacity="0.95"/>
<circle cx="113.6" cy="539.7" r="0.65" opacity="0.95"/>
<circle cx="173.9" cy="500.3" r="0.65" opacity="0.95"/>
<circle cx="211.8" cy="538.7" r="0.65" opacity="0.95"/>
<circle cx="211.3" cy="521.5" r="0.65" opacity="0.95"/>
<circle cx="137.9" cy="525.9" r="0.65" opacity="0.95"/>
<circle cx="101.2" cy="530.6" r="0.65" opacity="0.95"/>
<circle cx="154.8" cy="538.7" r="0.65" opacity="0.95"/>
<circle cx="65.6" cy="517.2" r="0.65" opacity="0.95"/>
<circle cx="215.0" cy="519.3" r="0.65" opacity="0.95"/>
<circle cx="114.0" cy="544.2" r="0.65" opacity="0.95"/>
<circle cx="411.6" cy="503.5" r="0.65" opacity="0.95"/>
<circle cx="300.8" cy="529.3" r="0.65" opacity="0.95"/>
<circle cx="321.5" cy="529.3" r="0.65" opacity="0.95"/>
<circle cx="298.2" cy="501.3" r="0.65" opacity="0.95"/>
<circle cx="331.0" cy="528.0" r="0.65" opacity="0.95"/>
<circle cx="285.3" cy="531.4" r="0.65" opacity="0.95"/>
<circle cx="250.5" cy="542.8" r="0.65" opacity="0.95"/>
<circle cx="387.1" cy="515.2" r="0.65" opacity="0.95"/>
<circle cx="303.4" cy="545.2" r="0.65" opacity="0.95"/>
<circle cx="296.5" cy="523.5" r="0.65" opacity="0.95"/>
<circle cx="307.3" cy="522.3" r="0.65" opacity="0.95"/>
<circle cx="341.1" cy="541.3" r="0.65" opacity="0.95"/>
<circle cx="331.4" cy="501.6" r="0.65" opacity="0.95"/>
<circle cx="371.1" cy="533.0" r="0.65" opacity="0.95"/>
<circle cx="375.3" cy="528.8" r="0.65" opacity="0.95"/>
<circle cx="318.9" cy="515.6" r="0.65" opacity="0.95"/>
<circle cx="426.5" cy="539.6" r="0.65" opacity="0.95"/>
<circle cx="412.3" cy="516.8" r="0.65" opacity="0.95"/>
<circle cx="139.2" cy="425.8" r="0.65" opacity="0.95"/>
<circle cx="150.0" cy="452.9" r="0.65" opacity="0.95"/>
<circle cx="201.6" cy="394.0" r="0.65" opacity="0.95"/>
<circle cx="83.6" cy="401.1" r="0.65" opacity="0.95"/>
<circle cx="130.9" cy="388.3" r="0.65" opacity="0.95"/>
<circle cx="128.2" cy="453.9" r="0.65" opacity="0.95"/>
<circle cx="156.0" cy="466.4" r="0.65" opacity="0.95"/>
<circle cx="213.5" cy="443.4" r="0.65" opacity="0.95"/>
<circle cx="100.9" cy="417.8" r="0.65" opacity="0.95"/>
<circle cx="213.7" cy="458.2" r="0.65" opacity="0.95"/>
<circle cx="124.3" cy="455.0" r="0.65" opacity="0.95"/>
<circle cx="145.4" cy="435.0" r="0.65" opacity="0.95"/>
<circle cx="96.5" cy="408.0" r="0.65" opacity="0.95"/>
<circle cx="146.0" cy="411.9" r="0.65" opacity="0.95"/>
<circle cx="244.7" cy="422.5" r="0.65" opacity="0.95"/>
<circle cx="177.2" cy="413.3" r="0.65" opacity="0.95"/>
<circle cx="206.1" cy="423.3" r="0.65" opacity="0.95"/>
<circle cx="109.0" cy="442.1" r="0.65" opacity="0.95"/>
<circle cx="106.0" cy="468.1" r="0.65" opacity="0.95"/>
<circle cx="102.3" cy="389.9" r="0.65" opacity="0.95"/>
<circle cx="162.8" cy="435.5" r="0.65" opacity="0.95"/>
<circle cx="173.0" cy="388.5" r="0.65" opacity="0.95"/>
<circle cx="204.5" cy="395.6" r="0.65" opacity="0.95"/>
<circle cx="47.6" cy="457.1" r="0.65" opacity="0.95"/>
<circle cx="191.5" cy="436.2" r="0.65" opacity="0.95"/>
<circle cx="225.9" cy="466.8" r="0.65" opacity="0.95"/>
<circle cx="154.2" cy="424.7" r="0.65" opacity="0.95"/>
<circle cx="49.7" cy="386.3" r="0.65" opacity="0.95"/>
<circle cx="102.5" cy="419.5" r="0.65" opacity="0.95"/>
<circle cx="40.5" cy="437.7" r="0.65" opacity="0.95"/>
<circle cx="79.2" cy="468.5" r="0.65" opacity="0.95"/>
<circle cx="233.4" cy="472.3" r="0.65" opacity="0.95"/>
<circle cx="167.5" cy="427.3" r="0.65" opacity="0.95"/>
<circle cx="177.9" cy="421.7" r="0.65" opacity="0.95"/>
<circle cx="399.9" cy="394.1" r="0.65" opacity="0.95"/>
<circle cx="422.9" cy="442.4" r="0.65" opacity="0.95"/>
<circle cx="366.2" cy="403.9" r="0.65" opacity="0.95"/>
<circle cx="367.2" cy="398.5" r="0.65" opacity="0.95"/>
<circle cx="369.1" cy="386.4" r="0.65" opacity="0.95"/>
<circle cx="382.3" cy="385.4" r="0.65" opacity="0.95"/>
<circle cx="363.3" cy="445.9" r="0.65" opacity="0.95"/>
<circle cx="379.4" cy="395.8" r="0.65" opacity="0.95"/>
<circle cx="290.4" cy="471.0" r="0.65" opacity="0.95"/>
<circle cx="376.7" cy="392.8" r="0.65" opacity="0.95"/>
<circle cx="222.5" cy="360.7" r="0.65" opacity="0.95"/>
<circle cx="66.4" cy="372.7" r="0.65" opacity="0.95"/>
<circle cx="42.9" cy="362.0" r="0.65" opacity="0.95"/>
<circle cx="190.8" cy="307.2" r="0.65" opacity="0.95"/>
<circle cx="90.3" cy="353.4" r="0.65" opacity="0.95"/>
<circle cx="193.8" cy="360.3" r="0.65" opacity="0.95"/>
<circle cx="285.6" cy="339.1" r="0.65" opacity="0.95"/>
<circle cx="259.5" cy="379.2" r="0.65" opacity="0.95"/>
<circle cx="397.1" cy="321.6" r="0.65" opacity="0.95"/>
 </g>
 <polyline points="38.6,174.9 39.4,183.5 40.3,196.2 41.4,211.8 42.2,224.6 42.8,231.7 43.4,218.9 43.9,199.1 44.5,182.0 45.4,186.3 46.2,194.8 47.1,199.8 48.2,194.8 49.6,193.4 51.0,192.0 51.9,184.9 52.8,183.5 53.6,186.3 54.7,194.1 55.9,187.7 57.0,181.3 58.1,180.6 59.3,183.5 60.4,187.7 61.6,193.4 62.4,200.5 63.0,211.8 63.5,226.0 64.1,211.8 64.7,197.6 65.2,189.1 66.1,182.0 66.9,187.7 68.1,186.3 69.2,183.5 70.4,179.2 71.5,174.9 72.3,178.5 73.2,186.3 74.0,194.8 74.9,199.8 76.0,193.4 77.2,191.3 78.6,187.7 80.0,184.9 80.9,193.4 81.7,207.6 82.3,221.8 82.8,231.7 83.4,221.8 84.0,200.5 84.5,184.9 85.1,174.9 85.7,179.2 86.5,187.7 87.7,196.2 88.8,200.5 89.9,195.5 91.4,192.0 92.8,189.1 94.2,183.5 95.3,181.3 96.5,184.9 97.6,189.8 98.7,197.6 99.9,203.3 100.7,197.6 101.6,195.5 102.2,206.2 102.7,221.8 103.3,238.8 103.9,247.3 104.4,233.1 105.0,211.8 105.6,197.6 106.4,193.4 107.5,195.5 109.0,197.6 110.0,197.6 111.1,189.1 112.3,182.7 113.4,190.6 114.5,199.1 115.7,207.6 116.5,211.8 117.7,201.9 118.8,193.4 119.9,187.7 121.1,186.3 122.2,192.0 123.1,207.6 123.9,221.8 124.8,231.0 125.6,221.8 126.5,206.2 127.3,194.8 128.5,186.3 129.6,184.9 131.0,187.7 132.7,190.6 134.4,193.4 135.8,196.2 136.7,203.3 137.5,211.8 138.1,216.8 139.0,213.3 140.1,211.1 141.2,211.8 142.4,218.9 143.2,227.5 144.1,233.1 144.6,221.8 145.2,204.7 145.8,191.3 146.6,193.4 147.5,201.9 148.6,206.9 150.3,207.6 152.0,209.0 153.2,213.3 154.0,220.4 154.9,223.9 155.4,211.8 156.0,201.9 156.8,194.8 157.7,204.7 158.3,214.7 159.1,220.4 160.0,210.4 160.8,201.9 161.7,207.6 162.5,218.9 163.4,221.8 163.9,230.3 164.8,238.8 165.6,233.1 166.5,221.8 167.4,213.3 168.5,210.4 169.6,209.7 171.0,211.8 172.7,214.0 174.4,214.7 175.9,210.4 177.3,206.2 178.7,204.7 180.1,207.6 181.5,211.1 183.0,214.7 184.1,217.5 185.0,227.5 185.9,248.1 186.4,265.2 187.0,248.1 187.8,222.6 189.0,211.2 190.1,207.0 191.2,205.6 192.4,212.6 193.5,219.7 194.7,225.4 195.8,216.9 196.9,210.5 198.1,219.7 199.2,229.7 200.3,222.6 201.5,218.3 202.6,225.4 203.7,236.8 204.9,251.0 205.7,262.3 206.3,268.0 206.9,253.8 207.4,239.6 208.0,235.4 208.8,239.6 209.7,241.0 210.6,226.8 211.4,216.2 212.5,219.0 214.0,224.0 215.4,228.3 216.8,224.0 218.5,221.2 220.5,220.9 222.8,220.9 224.2,221.5 225.0,226.8 225.9,239.6 226.5,252.4 227.0,257.4 227.6,246.7 228.2,232.5 229.0,222.6 230.1,225.4 231.3,225.4 232.4,228.3 233.5,235.4 234.7,242.5 235.5,236.8 236.4,228.3 237.5,226.8 238.9,229.7 240.4,235.4 241.5,239.6 242.6,235.4 243.5,233.9 244.6,239.6 245.8,248.1 246.6,259.5 247.5,269.4 248.3,259.5 248.9,248.1 249.7,242.5 250.9,245.3 252.0,246.0 253.1,242.5 254.6,240.8 256.0,242.5 257.7,246.7 259.4,251.0 260.0,250.5 261.1,254.7 262.3,259.0 263.4,251.9 264.5,241.3 265.4,246.2 266.2,263.3 267.1,277.5 267.7,285.3 268.2,271.8 268.8,254.7 269.4,245.5 270.2,249.1 271.4,256.2 272.8,257.6 274.2,253.3 275.6,249.8 277.0,249.1 278.5,253.3 280.2,256.2 281.9,254.7 283.6,254.0 284.7,257.6 285.8,266.1 287.0,277.5 287.8,287.4 288.4,291.7 289.0,283.1 289.5,271.8 290.4,264.7 291.2,271.8 292.1,276.0 292.9,266.1 294.1,259.0 295.5,257.6 296.6,260.4 297.8,264.7 299.2,268.9 300.9,268.2 302.6,267.5 304.3,269.7 305.4,274.6 306.3,283.1 307.1,294.5 308.0,304.4 308.5,294.5 309.1,283.1 310.0,278.9 311.1,277.5 312.5,276.8 313.9,274.6 315.4,271.8 316.8,271.1 318.2,273.2 319.6,278.9 321.0,281.7 322.7,283.1 324.2,285.3 325.6,287.4 326.7,290.2 327.6,297.3 328.4,304.4 329.3,295.9 330.1,288.8 331.3,284.6 332.7,281.7 333.8,281.0 335.0,283.1 336.1,288.4 337.3,294.8 339.0,297.6 340.7,298.0 342.1,294.1 343.2,287.0 344.1,288.4 344.9,294.1 346.4,296.2 347.8,299.7 348.6,308.3 349.5,318.2 350.0,322.5 350.6,316.8 351.5,306.8 352.6,299.7 353.7,297.6 354.9,301.2 356.0,305.4 357.4,307.6 359.1,306.8 360.8,305.4 362.3,308.3 363.7,312.5 364.8,314.7 365.7,309.7 366.5,305.4 367.4,316.8 368.2,331.0 369.1,340.9 369.6,331.0 370.2,316.8 371.1,305.4 372.2,307.6 373.3,311.8 374.7,312.5 376.2,309.7 377.3,309.0 378.4,313.9 379.9,318.2 381.3,320.3 382.7,322.5 384.4,323.9 386.1,323.9 387.5,325.3 388.7,332.4 389.5,343.8 390.1,349.4 390.6,342.3 391.5,333.8 392.4,328.1 393.2,331.0 394.1,335.2 395.0,332.8 396.1,329.9 397.3,328.5 398.4,332.1 399.5,329.9 400.7,328.5 402.1,332.1 403.5,337.0 404.9,345.6 406.4,354.1 407.8,362.6 408.6,369.7 409.5,362.6 410.6,354.1 411.8,349.8 412.9,348.4 414.3,351.2 415.7,354.1 417.4,351.9 419.1,349.8 420.8,350.5 422.5,352.6 424.2,355.5 425.9,359.7 427.4,364.0 428.5,369.7 429.4,379.6 430.2,391.0 430.8,393.1 431.3,383.9 432.2,372.5 433.0,368.3 434.2,369.7 435.3,367.6 436.7,366.8 438.2,369.7 439.6,373.9 441.0,376.8 442.7,378.9 444.4,381.0 446.1,383.2 447.5,385.3 448.4,393.8 449.2,402.3 450.1,405.2 450.6,399.5 451.5,395.2 452.4,397.4 453.5,393.8 454.6,396.7 455.8,393.8 456.9,393.1 458.0,396.7 459.2,395.9 460.3,395.2" fill="none" stroke="#f7983f" stroke-width="0.85" stroke-linejoin="round"/>
 <g stroke="#444" stroke-width="1"><line x1="38.2" y1="581.5" x2="38.2" y2="583.6"/><line x1="80.4" y1="581.5" x2="80.4" y2="583.6"/><line x1="122.7" y1="581.5" x2="122.7" y2="583.6"/><line x1="164.9" y1="581.5" x2="164.9" y2="583.6"/><line x1="207.1" y1="581.5" x2="207.1" y2="583.6"/><line x1="249.4" y1="581.5" x2="249.4" y2="583.6"/><line x1="291.6" y1="581.5" x2="291.6" y2="583.6"/><line x1="333.8" y1="581.5" x2="333.8" y2="583.6"/><line x1="376.0" y1="581.5" x2="376.0" y2="583.6"/><line x1="418.3" y1="581.5" x2="418.3" y2="583.6"/><line x1="460.5" y1="581.5" x2="460.5" y2="583.6"/></g>
 <g class="axis">
  <text x="38.6" y="143.2" style="font-size:8.3px">MB/s</text>
  <text x="459.8" y="143.2" text-anchor="end" style="font-size:8.3px">ms</text>
<text x="33.4" y="149.1" text-anchor="end">300</text><text x="33.4" y="221.3" text-anchor="end">250</text><text x="33.4" y="293.6" text-anchor="end">200</text><text x="33.4" y="365.8" text-anchor="end">150</text><text x="33.4" y="438.1" text-anchor="end">100</text><text x="33.4" y="510.3" text-anchor="end">50</text><text x="464.6" y="149.1">60</text><text x="464.6" y="221.3">50</text><text x="464.6" y="293.6">40</text><text x="464.6" y="365.8">30</text><text x="464.6" y="438.1">20</text><text x="464.6" y="510.3">10</text>
<text x="38.2" y="592.2" text-anchor="middle">0</text><text x="80.4" y="592.2" text-anchor="middle">2200</text><text x="122.7" y="592.2" text-anchor="middle">4400</text><text x="164.9" y="592.2" text-anchor="middle">6600</text><text x="207.1" y="592.2" text-anchor="middle">8800</text><text x="249.4" y="592.2" text-anchor="middle">11000</text><text x="291.6" y="592.2" text-anchor="middle">13200</text><text x="333.8" y="592.2" text-anchor="middle">15400</text><text x="376.0" y="592.2" text-anchor="middle">17600</text><text x="418.3" y="592.2" text-anchor="middle">19800</text><text x="477.4" y="592.2" text-anchor="end">22000gB</text>
 </g>
</svg>

<!-- right panel -->
<div class="abs" style="left:497px;top:128px;width:72px;height:23.6px;border:1.4px solid #5f8fae;border-radius:4px;background:#fdfdfd"></div>
<div class="t" style="left:523.3px;top:132.9px">开始</div>
<div class="sep" style="top:162px"></div>
<div class="rd" style="top:172.1px"></div><div class="t" style="left:507.6px;top:170.7px">读取</div>
<div class="rd on" style="top:189.1px"></div><div class="t" style="left:507.6px;top:187.7px">写入</div>
<div class="sep" style="top:205.2px"></div>
<div class="cb" style="top:216px"></div><div class="t" style="left:508px;top:214.5px">短行程</div>
<div class="abs" style="left:494px;top:234.4px;width:45.6px;height:22px;border:1px solid #eeeeee;border-bottom-color:#dcdcdc;border-radius:3px;background:#f6f6f6"></div>
<div class="t l" style="left:497.6px;top:238.2px;color:#8e8e8e">40</div>
<div class="abs" style="left:539.6px;top:234.4px;width:14.8px;height:22px;border:1px solid #c9c9c9;background:#f3f3f3"></div>
<div class="abs" style="left:540.6px;top:245px;width:12.8px;height:1px;background:#d0d0d0"></div>
<svg class="abs" style="left:544px;top:238.5px" width="6" height="14" viewBox="0 0 6 14"><path d="M0.6 4 L3 1 L5.4 4 Z M0.6 10 L3 13 L5.4 10 Z" fill="#555"/></svg>
<div class="t l" style="left:566.2px;top:239.2px;font-size:10.2px;letter-spacing:-0.3px">GB</div>
<div class="cb on" style="top:269.3px"><svg width="11" height="11" viewBox="0 0 11 11"><path d="M2.4 5.6 L4.6 7.8 L8.6 3.2" fill="none" stroke="#fff" stroke-width="1.2"/></svg></div><div class="t" style="left:508px;top:267.8px">传输速率</div>
<div class="sep" style="top:283.2px"></div>
<div class="t" style="left:494.4px;top:287.2px">最小</div>
<div class="lcd" style="top:303px;color:#3ab4ff">120.3 MB/s</div>
<div class="t" style="left:494.4px;top:322.9px">最大</div>
<div class="lcd" style="top:338.4px;color:#3ab4ff">280.1 MB/s</div>
<div class="t" style="left:494.4px;top:355.7px">平均</div>
<div class="lcd" style="top:372px;color:#3ab4ff">220.6 MB/s</div>
<div class="sep" style="top:396px"></div>
<div class="cb on" style="top:405px"><svg width="11" height="11" viewBox="0 0 11 11"><path d="M2.4 5.6 L4.6 7.8 L8.6 3.2" fill="none" stroke="#fff" stroke-width="1.2"/></svg></div><div class="t" style="left:508px;top:403.6px">访问时间</div>
<div class="lcd" style="top:419.6px;color:#ffff38">4.91 ms</div>
<div class="cb on" style="top:442.4px"><svg width="11" height="11" viewBox="0 0 11 11"><path d="M2.4 5.6 L4.6 7.8 L8.6 3.2" fill="none" stroke="#fff" stroke-width="1.2"/></svg></div><div class="t" style="left:508px;top:441px">突发速率</div>
<div class="lcd" style="top:457px;color:#fff">296.1 MB/s</div>
<div class="t" style="left:494.4px;top:475.7px"><span class="l">CPU </span>使用率</div>
<div class="lcd" style="top:492.4px;color:#fff">1.1%</div>
<div class="t" style="left:494.4px;top:524.3px">通过次数</div>
<div class="abs" style="left:495px;top:539.6px;width:61px;height:20.6px;border:1px solid #e4e4e4;border-bottom-color:#8e8e8e;border-radius:3px;background:#fff"></div>
<div class="t l" style="left:498px;top:542.3px">1</div>
<div class="abs" style="left:556px;top:539.6px;width:14.4px;height:20.6px;border:1px solid #bdbdbd;background:#efefef"></div>
<div class="abs" style="left:557px;top:549.6px;width:12.4px;height:1px;background:#c9c9c9"></div>
<svg class="abs" style="left:560px;top:542.6px" width="6" height="15" viewBox="0 0 6 15"><path d="M0.4 4.6 L3 1.4 L5.6 4.6 Z M0.4 10.4 L3 13.6 L5.6 10.4 Z" fill="#333"/></svg>
<div class="abs" style="left:495px;top:570px;width:51.4px;height:12.4px;background:#14aa30"></div>
<div class="t l" style="left:552px;top:569.4px;font-size:10.6px">1/1</div>
</div>
</body>
</html>
